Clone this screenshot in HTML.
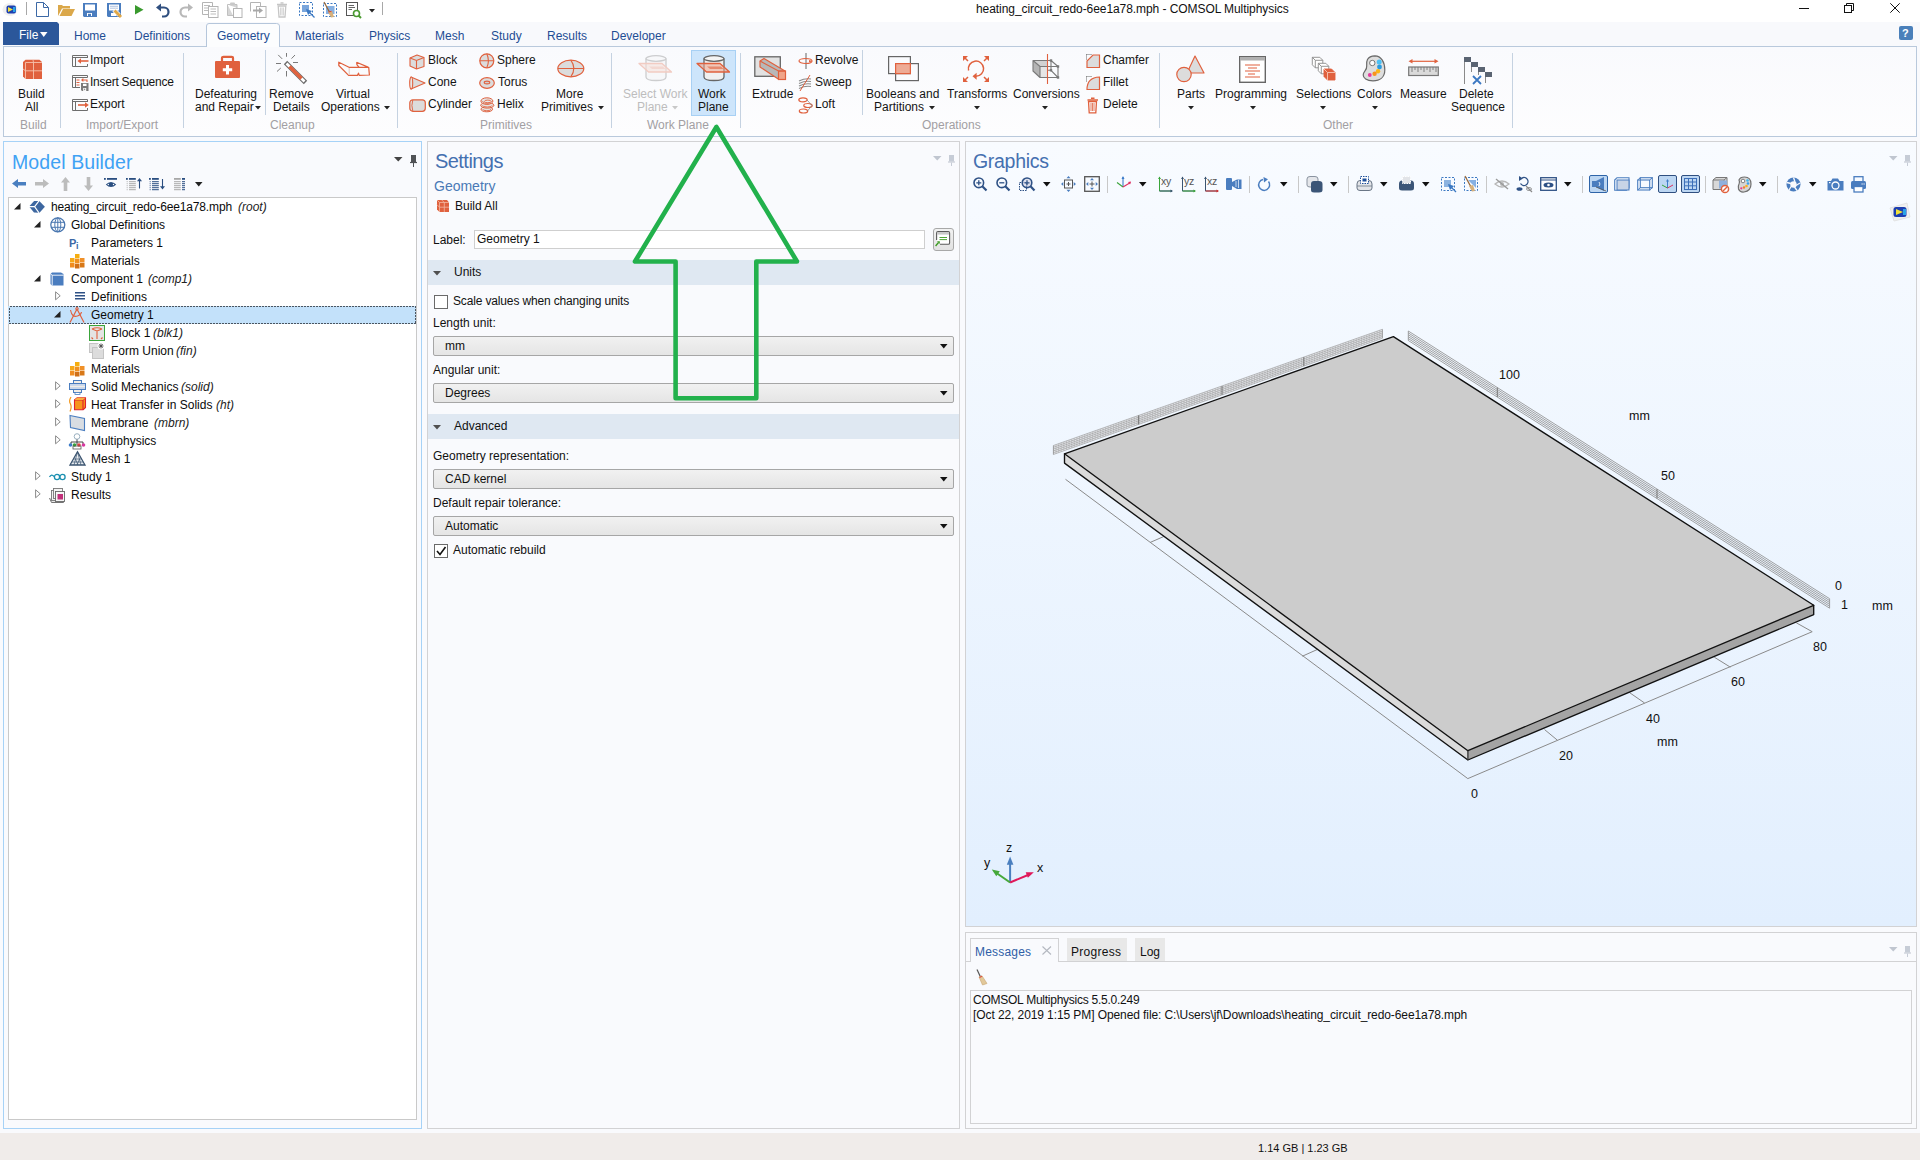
<!DOCTYPE html>
<html><head><meta charset="utf-8"><style>
html,body{margin:0;padding:0;}
body{width:1920px;height:1160px;overflow:hidden;position:relative;background:#f9fafd;font-family:"Liberation Sans",sans-serif;font-size:12px;color:#111;}
.t{position:absolute;white-space:nowrap;font-size:12px;line-height:12px;}
svg{overflow:visible}
</style></head><body>
<div style="position:absolute;left:0px;top:0px;width:1920px;height:22px;background:#ffffff"></div>
<div style="position:absolute;left:0px;top:22px;width:1920px;height:24px;background:#f8f9fc"></div>
<div style="position:absolute;left:3px;top:46px;width:1914px;height:90px;background:linear-gradient(#f9fafd,#fdfdfe);border:1px solid #b9c9dc;box-sizing:border-box;height:91px"></div>
<div style="position:absolute;left:3px;top:141px;width:419px;height:988px;background:#f9fafd;border:1px solid #a6d2f7;box-sizing:border-box"></div>
<div style="position:absolute;left:427px;top:141px;width:533px;height:988px;background:#f9fafd;border:1px solid #d2d2d4;box-sizing:border-box"></div>
<div style="position:absolute;left:965px;top:141px;width:952px;height:786px;background:linear-gradient(#f8fbff,#e2effe);border:1px solid #d2d2d4;box-sizing:border-box"></div>
<div style="position:absolute;left:965px;top:932px;width:952px;height:197px;background:#f9fafd;border:1px solid #d2d2d4;box-sizing:border-box"></div>
<div style="position:absolute;left:0px;top:1133px;width:1920px;height:27px;background:#f0ecea"></div>
<div class="t" style="left:1258px;top:1143px;font-size:11px;line-height:11px;color:#111;">1.14 GB | 1.23 GB</div>
<svg style="position:absolute;left:2px;top:2px;" width="16" height="14" viewBox="0 0 16 14"><ellipse cx="8" cy="7.5" rx="7.5" ry="6.5" fill="#e6e6e6" opacity="0.6"/><rect x="4.5" y="3.5" width="9.5" height="8" rx="2" fill="#1d3fb0"/><path d="M6 5 L11 7.5 L6 10 Z" fill="#f2e23a"/><rect x="11" y="5" width="2.5" height="5" fill="#2aa3e8"/></svg>
<div style="position:absolute;left:26px;top:2px;width:1px;height:13px;background:#a8a8a8"></div>
<svg style="position:absolute;left:36px;top:2px;" width="13" height="16" viewBox="0 0 13 16"><path d="M0.5 0.5 H7.5 L12.5 5.5 V14.5 H0.5 Z M7.5 0.5 V5.5 H12.5" fill="#fff" stroke="#3c69a6" stroke-width="1"/></svg>
<svg style="position:absolute;left:58px;top:5px;" width="17" height="12" viewBox="0 0 17 12"><path d="M0 0 H4 L5 1 H12 V3.5 H4 L0 11 Z" fill="#dba84a"/><path d="M1.5 11 L5 4 H17 L13.5 11 Z" fill="#dba84a"/></svg>
<svg style="position:absolute;left:83px;top:3px;" width="15" height="15" viewBox="0 0 15 15"><path d="M0 0 H14 V14 H1 L0 13 Z" fill="#4a7dbf"/><rect x="2" y="1.5" width="10" height="6" fill="#fff"/><rect x="4" y="10" width="5" height="3" fill="#fff"/><rect x="5" y="10.8" width="3" height="2.2" fill="#4a7dbf"/></svg>
<svg style="position:absolute;left:107px;top:3px;" width="16" height="16" viewBox="0 0 16 16"><path d="M0 0 H14 V14 H1 L0 13 Z" fill="#4a7dbf"/><rect x="2" y="1.5" width="10" height="6" fill="#fff"/><path d="M3 3.3 H11 M3 5.2 H11" stroke="#9ab3d8" stroke-width="0.8"/><rect x="4" y="10" width="5" height="3" fill="#fff"/><path d="M7 7 L12 12" stroke="#fff" stroke-width="4.5"/><path d="M7.5 7.5 L14 14" stroke="#e0a848" stroke-width="3"/></svg>
<svg style="position:absolute;left:135px;top:5px;" width="9" height="10" viewBox="0 0 9 10"><path d="M0 0 L8.5 4.7 L0 9.5 Z" fill="#3a9a2e"/></svg>
<svg style="position:absolute;left:156px;top:3px;" width="14" height="14" viewBox="0 0 14 14"><path d="M4.5 4.5 H8 A4.5 4.5 0 0 1 8 13.5 H6" fill="none" stroke="#2f4f7f" stroke-width="2.2"/><path d="M0 4.5 L5 0.5 V8.5 Z" fill="#2f4f7f"/></svg>
<svg style="position:absolute;left:179px;top:3px;" width="14" height="14" viewBox="0 0 14 14"><path d="M9.5 4.5 H6 A4.5 4.5 0 0 0 6 13.5 H8" fill="none" stroke="#b8b8b8" stroke-width="2.2"/><path d="M14 4.5 L9 0.5 V8.5 Z" fill="#b8b8b8"/></svg>
<svg style="position:absolute;left:202px;top:2px;" width="17" height="16" viewBox="0 0 17 16"><path d="M0.5 0.5 H10.5 V4 M0.5 0.5 V12.5 H6" fill="none" stroke="#b4b4b4"/><rect x="6.5" y="4.5" width="9.5" height="11" fill="#fff" stroke="#b4b4b4"/><path d="M2 3.5 H8 M2 6 H6 M2 8.5 H6 M8.5 7 H14 M8.5 9.5 H14 M8.5 12 H14" stroke="#b4b4b4" stroke-width="0.9"/></svg>
<svg style="position:absolute;left:227px;top:2px;" width="16" height="16" viewBox="0 0 16 16"><path d="M0.5 2.5 H10 V6 M0.5 2.5 V13.5 H6" fill="#d6d6d6" stroke="#c0c0c0"/><rect x="3" y="0.5" width="5" height="3" rx="1" fill="#c8c8c8"/><rect x="6.5" y="6.5" width="8.5" height="9" fill="#fff" stroke="#b4b4b4"/></svg>
<svg style="position:absolute;left:250px;top:2px;" width="17" height="16" viewBox="0 0 17 16"><path d="M0.5 9.5 V0.5 H10.5 V4" fill="none" stroke="#b4b4b4"/><rect x="6.5" y="4.5" width="9.5" height="11" fill="#fff" stroke="#b4b4b4"/><path d="M3 8.5 H10" stroke="#a8a8a8" stroke-width="2"/><path d="M9 5.5 L13 8.5 L9 11.5 Z" fill="#a8a8a8"/></svg>
<svg style="position:absolute;left:277px;top:2px;" width="11" height="16" viewBox="0 0 11 16"><path d="M0 2.5 H10 M3.5 0.8 H6.5" stroke="#c6c6c6" stroke-width="1.3"/><path d="M1.2 4 H8.8 L8 15 H2 Z" fill="none" stroke="#c6c6c6" stroke-width="1.3"/><path d="M3.6 5.5 V13.5 M5 5.5 V13.5 M6.4 5.5 V13.5" stroke="#c6c6c6" stroke-width="0.8"/></svg>
<svg style="position:absolute;left:299px;top:2px;" width="16" height="16" viewBox="0 0 16 16"><rect x="0.5" y="0.5" width="13" height="13" fill="none" stroke="#3b78c2" stroke-dasharray="2,1.5"/><rect x="3" y="3" width="7" height="7" fill="#7aa6dc"/><path d="M8 8 L15.5 15.5" stroke="#3b78c2" stroke-width="1.3"/><path d="M7 7 L13 9 L9 13 Z" fill="#3b78c2"/></svg>
<svg style="position:absolute;left:323px;top:2px;" width="15" height="16" viewBox="0 0 15 16"><rect x="0.5" y="1.5" width="13" height="13" fill="none" stroke="#3b78c2" stroke-dasharray="2,1.5"/><rect x="3" y="4" width="8.5" height="8" fill="#86b0e2"/><path d="M1 0 L7 11" stroke="#9a6a3a" stroke-width="1.3"/><path d="M5 10 L9 9 L11 15 L8 15.5 Z" fill="#d6b07a"/><path d="M5.5 10 L8.5 9.3" stroke="#d84a3a" stroke-width="1"/></svg>
<svg style="position:absolute;left:346px;top:2px;" width="16" height="17" viewBox="0 0 16 17"><rect x="0.5" y="0.5" width="11" height="13" fill="#fff" stroke="#555"/><path d="M2.5 3.5 H8 M2.5 5.5 H9 M2.5 7.5 H6" stroke="#555" stroke-width="0.9"/><circle cx="10.5" cy="11.5" r="3" fill="#fff" stroke="#4a9a30" stroke-width="1.6"/><path d="M12.5 13.5 L15 16" stroke="#4a9a30" stroke-width="2"/></svg>
<svg style="position:absolute;left:369px;top:9px;" width="6" height="4" viewBox="0 0 6 4"><path d="M0 0 H6 L3 3.5 Z" fill="#222"/></svg>
<div style="position:absolute;left:382px;top:2px;width:1px;height:13px;background:#a8a8a8"></div>
<div class="t" style="left:976px;top:3px;color:#111;letter-spacing:-0.07px">heating_circuit_redo-6ee1a78.mph - COMSOL Multiphysics</div>
<div style="position:absolute;left:1799px;top:8px;width:10px;height:1px;background:#111"></div>
<svg style="position:absolute;left:1844px;top:3px;" width="10" height="10" viewBox="0 0 10 10"><path d="M2.5 2.5 V0.5 H9.5 V7.5 H7.5" fill="none" stroke="#111"/><rect x="0.5" y="2.5" width="7" height="7" fill="none" stroke="#111"/></svg>
<svg style="position:absolute;left:1890px;top:3px;" width="10" height="10" viewBox="0 0 10 10"><path d="M0.3 0.3 L9.7 9.7 M9.7 0.3 L0.3 9.7" stroke="#111" stroke-width="1"/></svg>
<svg style="position:absolute;left:3px;top:22px;" width="57" height="24" viewBox="0 0 57 24"><path d="M0 0 H54 L56 2 V23 H0 Z" fill="#2b579a"/></svg>
<div class="t" style="left:19px;top:29px;color:#ffffff;">File</div>
<svg style="position:absolute;left:40px;top:32px;" width="8" height="6" viewBox="0 0 8 6"><path d="M0 0 H7.5 L3.75 5 Z" fill="#fff"/></svg>
<div class="t" style="left:74px;top:30px;color:#1e4d94;">Home</div>
<div class="t" style="left:134px;top:30px;color:#1e4d94;">Definitions</div>
<svg style="position:absolute;left:206px;top:23px;" width="74" height="24" viewBox="0 0 74 24"><path d="M0.5 24 V3 Q0.5 0.5 3 0.5 H70.5 Q73.5 0.5 73.5 3 V24" fill="#fcfdfe" stroke="#b5c6db"/></svg>
<div class="t" style="left:217px;top:30px;color:#1e4d94;">Geometry</div>
<div class="t" style="left:295px;top:30px;color:#1e4d94;">Materials</div>
<div class="t" style="left:369px;top:30px;color:#1e4d94;">Physics</div>
<div class="t" style="left:435px;top:30px;color:#1e4d94;">Mesh</div>
<div class="t" style="left:491px;top:30px;color:#1e4d94;">Study</div>
<div class="t" style="left:547px;top:30px;color:#1e4d94;">Results</div>
<div class="t" style="left:611px;top:30px;color:#1e4d94;">Developer</div>
<div style="position:absolute;left:1899px;top:26px;width:14px;height:14px;background:#4a80ba;border-radius:2px"></div>
<div class="t" style="left:1902px;top:28px;font-size:11px;line-height:11px;color:#fff;font-weight:bold">?</div>
<div style="position:absolute;left:60px;top:53px;width:1px;height:75px;background:#c5d2e1"></div>
<div style="position:absolute;left:183px;top:53px;width:1px;height:75px;background:#c5d2e1"></div>
<div style="position:absolute;left:265px;top:50px;width:1px;height:65px;background:#c5d2e1"></div>
<div style="position:absolute;left:397px;top:53px;width:1px;height:75px;background:#c5d2e1"></div>
<div style="position:absolute;left:611px;top:53px;width:1px;height:75px;background:#c5d2e1"></div>
<div style="position:absolute;left:740px;top:53px;width:1px;height:75px;background:#c5d2e1"></div>
<div style="position:absolute;left:862px;top:50px;width:1px;height:65px;background:#c5d2e1"></div>
<div style="position:absolute;left:1159px;top:53px;width:1px;height:75px;background:#c5d2e1"></div>
<div style="position:absolute;left:1512px;top:53px;width:1px;height:75px;background:#c5d2e1"></div>
<div class="t" style="left:20px;top:119px;color:#a29fa3;">Build</div>
<div class="t" style="left:86px;top:119px;color:#a29fa3;">Import/Export</div>
<div class="t" style="left:270px;top:119px;color:#a29fa3;">Cleanup</div>
<div class="t" style="left:480px;top:119px;color:#a29fa3;">Primitives</div>
<div class="t" style="left:647px;top:119px;color:#a29fa3;">Work Plane</div>
<div class="t" style="left:922px;top:119px;color:#a29fa3;">Operations</div>
<div class="t" style="left:1323px;top:119px;color:#a29fa3;">Other</div>
<svg style="position:absolute;left:0;top:0" width="1920" height="140" viewBox="0 0 1920 140"><path d="M23 62 L25.5 59.8 H39.5 L42 62 V79 H25.5 L23 76.5 Z" fill="#e0613e"/><path d="M25.5 62.5 V79 M25.5 62.5 H42 M33.5 62.5 V79 M25.5 70.8 H42 M23 69 L25.5 70.8 M33 59.8 L33.5 62.5" stroke="#f5c2ad" stroke-width="0.9" fill="none"/></svg>
<div class="t" style="left:18px;top:88px;color:#141414;">Build</div>
<div class="t" style="left:25px;top:101px;color:#141414;">All</div>
<svg style="position:absolute;left:0;top:0" width="1920" height="140" viewBox="0 0 1920 140"><path d="M87.5 58 V55.5 H72.5 V66.5 H87.5 V64 M72.5 57.5 H87.5 M75.5 57.5 V66.5" fill="none" stroke="#6e6e6e" stroke-width="1"/><path d="M80 61 H88.5" stroke="#e0613e" stroke-width="1.6"/><path d="M77.5 61 L81 58.3 V63.7 Z" fill="#e0613e"/><path d="M87.5 77.5 V75.5 H72.5 V87.5 H80 M72.5 77.5 H87.5 M75.5 77.5 V87.5" fill="none" stroke="#6e6e6e" stroke-width="1"/><path d="M76.5 80 H79.5 M76.5 82.5 H79.5 M76.5 85 H79.5" stroke="#e0613e" stroke-width="1"/><path d="M83 80 H87 V82" fill="none" stroke="#e0613e" stroke-width="1.1"/><path d="M81 80 L83.3 78 V82 Z" fill="#e0613e"/><path d="M81 83 H88.5 V91 H82 L81 90 Z" fill="#7a7a7a"/><rect x="83" y="83.8" width="3.5" height="2.2" fill="#fff"/><rect x="83.2" y="88" width="3" height="3" fill="#fff"/><rect x="84.2" y="88.6" width="1" height="1.6" fill="#7a7a7a"/><path d="M87.5 102 V99.5 H72.5 V110.5 H87.5 V108 M72.5 101.5 H87.5 M75.5 101.5 V110.5" fill="none" stroke="#6e6e6e" stroke-width="1"/><path d="M78 105 H85.5" stroke="#e0613e" stroke-width="1.6"/><path d="M88.8 105 L85 102.2 V107.8 Z" fill="#e0613e"/></svg>
<div class="t" style="left:90px;top:54px;color:#141414;">Import</div>
<div class="t" style="left:90px;top:76px;color:#141414;letter-spacing:-0.25px">Insert Sequence</div>
<div class="t" style="left:90px;top:98px;color:#141414;">Export</div>
<svg style="position:absolute;left:215px;top:56px;" width="26" height="23" viewBox="0 0 26 23"><rect x="0" y="5" width="25" height="17" rx="1" fill="#e0613e"/><path d="M7 5.5 V2 Q7 0.8 8.5 0.8 H16.5 Q18 0.8 18 2 V5.5" fill="none" stroke="#e0613e" stroke-width="2.2"/><path d="M12.5 9 V18.5 M7.8 13.7 H17.2" stroke="#fff" stroke-width="3"/></svg>
<div class="t" style="left:195px;top:88px;color:#141414;">Defeaturing</div>
<div class="t" style="left:195px;top:101px;color:#141414;">and Repair</div>
<svg style="position:absolute;left:255px;top:106px;" width="6" height="4" viewBox="0 0 6 4"><path d="M0 0 H6 L3 3.5 Z" fill="#222"/></svg>
<svg style="position:absolute;left:0;top:0" width="1920" height="140" viewBox="0 0 1920 140"><path d="M286.5 53 V56.8 M286.5 71 V76.5 M276 63.5 H281 M293 62.5 H298 M278.2 54.9 L282.2 58.9 M291.5 58.6 L295 55 M277 71.5 L280.8 68" stroke="#7a7a7a" stroke-width="1"/><path d="M285.5 62.5 L305.5 82.5" stroke="#6a6a6a" stroke-width="4.8" stroke-linecap="butt"/><path d="M286.5 63.5 L304.5 81.5" stroke="#ffffff" stroke-width="2.6"/><path d="M289.5 66.5 L301.5 78.5" stroke="#e0613e" stroke-width="3.6"/><path d="M338.8 62.2 L349 67.3 H368.7 L369.4 75 L359.2 75.4 L358.5 73.2 L357.4 75.4 L348.6 75.4 L338.8 65.5 Z M356.6 62.2 L368 67.1 M357 64.8 L359 67.1 M356.6 62.2 L357 64.8" fill="none" stroke="#e0613e" stroke-width="1.25" stroke-linejoin="round"/><path d="M349.2 68 L349.3 75" stroke="#e8d0c8" stroke-width="1.2"/></svg>
<div class="t" style="left:269px;top:88px;color:#141414;">Remove</div>
<div class="t" style="left:273px;top:101px;color:#141414;">Details</div>
<div class="t" style="left:336px;top:88px;color:#141414;">Virtual</div>
<div class="t" style="left:321px;top:101px;color:#141414;">Operations</div>
<svg style="position:absolute;left:384px;top:106px;" width="6" height="4" viewBox="0 0 6 4"><path d="M0 0 H6 L3 3.5 Z" fill="#222"/></svg>
<svg style="position:absolute;left:409px;top:54px;" width="16" height="16" viewBox="0 0 16 16"><path d="M1 4 L8 1 L15 3.5 V12.5 L7.5 15 L1 12 Z" fill="#dcdcdc" stroke="#e0613e" stroke-width="1.1" stroke-linejoin="round"/><path d="M1 4 L7.5 6.5 L15 3.5 M7.5 6.5 V15" fill="none" stroke="#e0613e" stroke-width="1.1"/></svg>
<div class="t" style="left:428px;top:54px;color:#141414;">Block</div>
<svg style="position:absolute;left:409px;top:76px;" width="17" height="14" viewBox="0 0 17 14"><path d="M2 1 L16 7 L2 13 Z" fill="#dcdcdc" stroke="#e0613e" stroke-width="1.1" stroke-linejoin="round"/><ellipse cx="2.2" cy="7" rx="1.5" ry="6" fill="#e8e8e8" stroke="#e0613e" stroke-width="1.1"/></svg>
<div class="t" style="left:428px;top:76px;color:#141414;">Cone</div>
<svg style="position:absolute;left:409px;top:99px;" width="17" height="13" viewBox="0 0 17 13"><rect x="0.8" y="0.8" width="15.5" height="11.5" rx="3" fill="#dcdcdc" stroke="#e0613e" stroke-width="1.2"/><path d="M3.8 1 Q2 6.5 3.8 12" fill="none" stroke="#e0613e" stroke-width="0.9"/></svg>
<div class="t" style="left:428px;top:98px;color:#141414;">Cylinder</div>
<svg style="position:absolute;left:479px;top:53px;" width="16" height="16" viewBox="0 0 16 16"><circle cx="7.8" cy="7.8" r="7" fill="#dcdcdc" stroke="#e0613e" stroke-width="1.2"/><path d="M0.8 7.8 H14.8 M7.8 0.8 Q11 7.8 7.8 14.8" fill="none" stroke="#e0613e" stroke-width="1.1"/></svg>
<div class="t" style="left:497px;top:54px;color:#141414;">Sphere</div>
<svg style="position:absolute;left:479px;top:77px;" width="16" height="12" viewBox="0 0 16 12"><ellipse cx="8" cy="6" rx="7.3" ry="5.3" fill="#dcdcdc" stroke="#e0613e" stroke-width="1.2"/><ellipse cx="8" cy="5.5" rx="2.8" ry="1.4" fill="#d0d0d0" stroke="#e0613e" stroke-width="1.1"/></svg>
<div class="t" style="left:498px;top:76px;color:#141414;">Torus</div>
<svg style="position:absolute;left:0;top:0" width="1920" height="140" viewBox="0 0 1920 140"><ellipse cx="486.8" cy="109.2" rx="5.8" ry="2.6" fill="#e4e4e4" stroke="#e0613e" stroke-width="1"/><path d="M482.8 109.2 A4.0 1.5 0 0 0 490.8 109.2" fill="none" stroke="#e0613e" stroke-width="0.85"/><ellipse cx="487.3" cy="105.3" rx="6.6" ry="2.8" fill="#e4e4e4" stroke="#e0613e" stroke-width="1"/><path d="M482.5 105.3 A4.8 1.6999999999999997 0 0 0 492.1 105.3" fill="none" stroke="#e0613e" stroke-width="0.85"/><ellipse cx="486.9" cy="101.1" rx="6.0" ry="3.3" fill="#e4e4e4" stroke="#e0613e" stroke-width="1"/><path d="M482.7 101.1 A4.2 2.1999999999999997 0 0 0 491.09999999999997 101.1" fill="none" stroke="#e0613e" stroke-width="0.85"/><ellipse cx="487.8" cy="101.4" rx="3.3" ry="1.3" fill="#e8e8e8" stroke="#e0613e" stroke-width="0.85"/></svg>
<div class="t" style="left:497px;top:98px;color:#141414;">Helix</div>
<svg style="position:absolute;left:557px;top:59px;" width="28" height="19" viewBox="0 0 28 19"><ellipse cx="13.8" cy="9.5" rx="13" ry="8.3" fill="#dcdcdc" stroke="#e0613e" stroke-width="1.2"/><path d="M1 9.5 H26.8 M13.8 1.2 Q20 9.5 13.8 17.8" fill="none" stroke="#e0613e" stroke-width="1.1"/></svg>
<div class="t" style="left:556px;top:88px;color:#141414;">More</div>
<div class="t" style="left:541px;top:101px;color:#141414;">Primitives</div>
<svg style="position:absolute;left:598px;top:106px;" width="6" height="4" viewBox="0 0 6 4"><path d="M0 0 H6 L3 3.5 Z" fill="#222"/></svg>
<svg style="position:absolute;left:639px;top:55px;" width="34" height="27" viewBox="0 0 34 27"><g opacity="0.3"><path d="M7 3.5 V22 Q7 25.5 17 25.5 Q27 25.5 27 22 V3.5" fill="#f0f0f0" stroke="#666666" stroke-width="1.3"/><ellipse cx="17" cy="3.5" rx="10" ry="2.8" fill="#f4f4f4" stroke="#666666" stroke-width="1.3"/><path d="M0 8.5 H23 L32.5 17 H9.5 Z" fill="#f0a58c" fill-opacity="0.55" stroke="#e0613e" stroke-width="1.3" stroke-linejoin="round"/><path d="M10 11.5 H24 L26.5 14 H13 Z" fill="#e0613e" fill-opacity="0.6"/></g></svg>
<div class="t" style="left:623px;top:88px;color:#bdbdbd;">Select Work</div>
<div class="t" style="left:637px;top:101px;color:#bdbdbd;">Plane</div>
<svg style="position:absolute;left:672px;top:106px;" width="6" height="4" viewBox="0 0 6 4"><path d="M0 0 H6 L3 3.5 Z" fill="#c8c8c8"/></svg>
<div style="position:absolute;left:691px;top:50px;width:45px;height:66px;background:#cde5fb;border:1px solid #a7d0f4;box-sizing:border-box"></div>
<svg style="position:absolute;left:697px;top:55px;" width="34" height="27" viewBox="0 0 34 27"><g opacity="1"><path d="M7 3.5 V22 Q7 25.5 17 25.5 Q27 25.5 27 22 V3.5" fill="#f0f0f0" stroke="#666666" stroke-width="1.3"/><ellipse cx="17" cy="3.5" rx="10" ry="2.8" fill="#f4f4f4" stroke="#666666" stroke-width="1.3"/><path d="M0 8.5 H23 L32.5 17 H9.5 Z" fill="#f0a58c" fill-opacity="0.55" stroke="#e0613e" stroke-width="1.3" stroke-linejoin="round"/><path d="M10 11.5 H24 L26.5 14 H13 Z" fill="#e0613e" fill-opacity="0.6"/></g></svg>
<div class="t" style="left:698px;top:88px;color:#141414;">Work</div>
<div class="t" style="left:698px;top:101px;color:#141414;">Plane</div>
<svg style="position:absolute;left:754px;top:56px;" width="33" height="25" viewBox="0 0 33 25"><rect x="0.8" y="0.8" width="25.5" height="19.5" fill="#e2e2e2" stroke="#666666" stroke-width="1.3"/><path d="M6 5 L10 2.5 L31 15 L31 23.5 L25 23.5 L6 11 Z" fill="#b8b8b8" stroke="#e0613e" stroke-width="1.2" stroke-linejoin="round"/><rect x="24.5" y="15" width="7" height="8.5" fill="#f0a58a" stroke="#e0613e" stroke-width="1.2"/><path d="M6 5 L24.5 15 L31 15" fill="none" stroke="#e0613e" stroke-width="1.2"/></svg>
<div class="t" style="left:752px;top:88px;color:#141414;">Extrude</div>
<svg style="position:absolute;left:798px;top:53px;" width="15" height="17" viewBox="0 0 15 17"><path d="M8 0 V16" stroke="#666666" stroke-width="1"/><ellipse cx="7.5" cy="8" rx="6.5" ry="2.5" fill="none" stroke="#e0613e" stroke-width="1.2"/><path d="M11 7 L14.5 8 L11 9.5" fill="#e0613e"/></svg>
<div class="t" style="left:815px;top:54px;color:#141414;">Revolve</div>
<svg style="position:absolute;left:798px;top:75px;" width="14" height="17" viewBox="0 0 14 17"><path d="M1 6 Q7 3 13 4 M1 8.5 Q7 5.5 13 6.5 M1 11 Q7 8 13 9 M1 13.5 Q7 10.5 13 11.5" fill="none" stroke="#8a8a8a" stroke-width="1.2"/><path d="M2 16 L12 0" stroke="#e0613e" stroke-width="1"/></svg>
<div class="t" style="left:815px;top:76px;color:#141414;">Sweep</div>
<svg style="position:absolute;left:798px;top:97px;" width="15" height="17" viewBox="0 0 15 17"><ellipse cx="5" cy="2.8" rx="4.2" ry="2" fill="none" stroke="#e0613e" stroke-width="1.2"/><ellipse cx="10" cy="8.5" rx="4.2" ry="2" fill="none" stroke="#e0613e" stroke-width="1.2"/><ellipse cx="5.5" cy="14" rx="4.2" ry="2" fill="none" stroke="#e0613e" stroke-width="1.2"/><path d="M9 3 L14 8.5 L9.5 14" fill="none" stroke="#888" stroke-width="0.8"/></svg>
<div class="t" style="left:815px;top:98px;color:#141414;">Loft</div>
<svg style="position:absolute;left:888px;top:56px;" width="31" height="26" viewBox="0 0 31 26"><rect x="0.6" y="0.6" width="21.8" height="17" fill="none" stroke="#666666" stroke-width="1.2"/><rect x="7.6" y="7.6" width="22.8" height="17" fill="none" stroke="#666666" stroke-width="1.2"/><rect x="7.6" y="7.6" width="14.8" height="10" fill="#eeab95" stroke="#e0613e" stroke-width="1.2"/></svg>
<div class="t" style="left:866px;top:88px;color:#141414;">Booleans and</div>
<div class="t" style="left:874px;top:101px;color:#141414;">Partitions</div>
<svg style="position:absolute;left:929px;top:106px;" width="6" height="4" viewBox="0 0 6 4"><path d="M0 0 H6 L3 3.5 Z" fill="#222"/></svg>
<svg style="position:absolute;left:0;top:0" width="1920" height="140" viewBox="0 0 1920 140"><path d="M963 56 H968 L963 61 Z M989 56 H984 L989 61 Z M963 82 H968 L963 77 Z M989 82 H984 L989 77 Z" fill="#e0613e"/><path d="M964.5 57.5 L968 61 M987.5 57.5 L984 61 M964.5 80.5 L968 77 M987.5 80.5 L984 77" stroke="#e0613e" stroke-width="1.5"/><path d="M968.6 70.5 A7.6 7.6 0 1 1 976 76.3" fill="none" stroke="#e0613e" stroke-width="1.5"/><path d="M972.5 76.3 L976.6 72.8 L976.6 79.8 Z" fill="#e0613e"/></svg>
<div class="t" style="left:947px;top:88px;color:#141414;">Transforms</div>
<svg style="position:absolute;left:974px;top:106px;" width="6" height="4" viewBox="0 0 6 4"><path d="M0 0 H6 L3 3.5 Z" fill="#222"/></svg>
<svg style="position:absolute;left:0;top:0" width="1920" height="140" viewBox="0 0 1920 140"><path d="M1033 60.5 H1047.5 V66.5 H1040 Z" fill="#d2d2d2"/><path d="M1033 60.5 L1040 66.5 V77.5 L1033 71 Z" fill="#b4b4b4"/><rect x="1040" y="66.5" width="7.5" height="11" fill="#e6e6e6"/><path d="M1033 60.5 H1051 L1058 66.5 V77.5 H1040 L1033 71 Z M1033 60.5 L1040 66.5 H1058 M1040 66.5 V77.5 M1051 60.5 V70.3 H1047.5 M1051 70.3 L1058 77.5" fill="none" stroke="#7a7a7a" stroke-width="1.1" stroke-linejoin="round"/><rect x="1049.8" y="59.3" width="2.4" height="2.4" fill="#777"/><rect x="1056.8" y="65.3" width="2.4" height="2.4" fill="#777"/><rect x="1049.8" y="69.1" width="2.4" height="2.4" fill="#777"/><rect x="1056.8" y="76.3" width="2.4" height="2.4" fill="#777"/><path d="M1047.5 54 V84" stroke="#e0613e" stroke-width="1.1"/></svg>
<div class="t" style="left:1013px;top:88px;color:#141414;">Conversions</div>
<svg style="position:absolute;left:1042px;top:106px;" width="6" height="4" viewBox="0 0 6 4"><path d="M0 0 H6 L3 3.5 Z" fill="#222"/></svg>
<svg style="position:absolute;left:1086px;top:54px;" width="15" height="15" viewBox="0 0 15 15"><path d="M0.5 0.5 H6 M0.5 0.5 V6" stroke="#666" stroke-width="1" stroke-dasharray="1,1"/><path d="M1 13.5 V7 L7 1 H13.5 V13.5 Z" fill="#dcdcdc" stroke="#e0613e" stroke-width="1.2"/></svg>
<div class="t" style="left:1103px;top:54px;color:#141414;">Chamfer</div>
<svg style="position:absolute;left:1086px;top:76px;" width="15" height="15" viewBox="0 0 15 15"><path d="M0.5 0.5 H6 M0.5 0.5 V6" stroke="#666" stroke-width="1" stroke-dasharray="1,1"/><path d="M1 13.5 Q1 1.5 13.5 1 V13.5 Z" fill="#dcdcdc" stroke="#e0613e" stroke-width="1.2"/></svg>
<div class="t" style="left:1103px;top:76px;color:#141414;">Fillet</div>
<svg style="position:absolute;left:1087px;top:97px;" width="12" height="17" viewBox="0 0 12 17"><path d="M0.5 3 H11 M4 1.2 H7.5" stroke="#e0613e" stroke-width="1.5"/><path d="M1.5 4.5 H9.5 L8.8 15.8 H2.2 Z" fill="none" stroke="#e0613e" stroke-width="1.3"/><path d="M4 6 V14 M5.5 6 V14 M7 6 V14" stroke="#e0613e" stroke-width="0.8"/></svg>
<div class="t" style="left:1103px;top:98px;color:#141414;">Delete</div>
<svg style="position:absolute;left:1176px;top:55px;" width="29" height="28" viewBox="0 0 29 28"><path d="M19 1 L28 18 H11 Z" fill="#dcdcdc" stroke="#e0613e" stroke-width="1.2" stroke-linejoin="round"/><circle cx="8" cy="19.5" r="7.2" fill="#dcdcdc" stroke="#e0613e" stroke-width="1.2"/></svg>
<div class="t" style="left:1177px;top:88px;color:#141414;">Parts</div>
<svg style="position:absolute;left:1188px;top:106px;" width="6" height="4" viewBox="0 0 6 4"><path d="M0 0 H6 L3 3.5 Z" fill="#222"/></svg>
<svg style="position:absolute;left:1239px;top:56px;" width="27" height="27" viewBox="0 0 27 27"><rect x="0.7" y="0.7" width="25.6" height="25.6" fill="#fff" stroke="#666666" stroke-width="1.4"/><rect x="1" y="1" width="25" height="3.5" fill="#b0b0b0"/><path d="M6 9 H21 M9 12 H18 M6 15 H21 M9 18 H16 M6 21 H21" stroke="#e0613e" stroke-width="1.1"/></svg>
<div class="t" style="left:1215px;top:88px;color:#141414;">Programming</div>
<svg style="position:absolute;left:1250px;top:106px;" width="6" height="4" viewBox="0 0 6 4"><path d="M0 0 H6 L3 3.5 Z" fill="#222"/></svg>
<svg style="position:absolute;left:0;top:0" width="1920" height="140" viewBox="0 0 1920 140"><path d="M1312.3 57.3 H1319.8 L1322.8 60.3 V67.8 H1315.3 L1312.3 64.8 Z" fill="#ffffff" stroke="#8a8a8a" stroke-width="0.9" stroke-linejoin="round"/><path d="M1312.3 57.3 L1315.3 60.3 H1322.8 M1315.3 60.3 V67.8" fill="none" stroke="#8a8a8a" stroke-width="0.9"/><path d="M1318.3 63.3 H1325.8 L1328.8 66.3 V73.8 H1321.3 L1318.3 70.8 Z" fill="#ffffff" stroke="#8a8a8a" stroke-width="0.9" stroke-linejoin="round"/><path d="M1318.3 63.3 L1321.3 66.3 H1328.8 M1321.3 66.3 V73.8" fill="none" stroke="#8a8a8a" stroke-width="0.9"/><path d="M1324 69 H1331.5 L1335.0 72.5 V80.0 H1327.5 L1324 76.5 Z" fill="#e0613e" stroke="#e0613e" stroke-width="0.9" stroke-linejoin="round"/><path d="M1324 69 L1327.5 72.5 H1335.0 M1327.5 72.5 V80.0" fill="none" stroke="#f7c6b4" stroke-width="0.9"/></svg>
<div class="t" style="left:1296px;top:88px;color:#141414;">Selections</div>
<svg style="position:absolute;left:1320px;top:106px;" width="6" height="4" viewBox="0 0 6 4"><path d="M0 0 H6 L3 3.5 Z" fill="#222"/></svg>
<svg style="position:absolute;left:0;top:0" width="1920" height="140" viewBox="0 0 1920 140"><path d="M1375 55.8 C1381 55.8 1384.8 62 1384.8 70 C1384.8 77 1380 80.8 1373 80.8 C1366.5 80.8 1363.2 78 1363.2 75 C1363.2 71.5 1367.2 70.5 1366.7 66 C1366.2 62 1366.5 56 1375 55.8 Z" fill="#dedede" stroke="#6a6a6a" stroke-width="1.2"/><circle cx="1372.3" cy="63" r="2.7" fill="#fff" stroke="#6a6a6a" stroke-width="0.9"/><circle cx="1379.2" cy="62" r="2.5" fill="#4cc0f4"/><circle cx="1379.5" cy="67" r="2.4" fill="#2a9ce0"/><circle cx="1378" cy="71.2" r="2.2" fill="#fbb516"/><circle cx="1374.6" cy="73.8" r="2.2" fill="#f7931e"/><circle cx="1369.8" cy="75" r="1.9" fill="#e83aa0"/></svg>
<div class="t" style="left:1357px;top:88px;color:#141414;">Colors</div>
<svg style="position:absolute;left:1372px;top:106px;" width="6" height="4" viewBox="0 0 6 4"><path d="M0 0 H6 L3 3.5 Z" fill="#222"/></svg>
<svg style="position:absolute;left:1408px;top:59px;" width="31" height="18" viewBox="0 0 31 18"><path d="M3 2.3 H28" stroke="#e0613e" stroke-width="1.2"/><path d="M0.5 2.3 L4.5 0 V4.6 Z M30.5 2.3 L26.5 0 V4.6 Z" fill="#e0613e"/><rect x="0.7" y="8" width="29.6" height="8.5" fill="#dadada" stroke="#777" stroke-width="1.2"/><path d="M4 8 V13 M7 8 V11 M10 8 V13 M13 8 V11 M16 8 V13 M19 8 V11 M22 8 V13 M25 8 V11 M28 8 V13" stroke="#777" stroke-width="0.9"/></svg>
<div class="t" style="left:1400px;top:88px;color:#141414;">Measure</div>
<svg style="position:absolute;left:1464px;top:57px;" width="29" height="28" viewBox="0 0 29 28"><rect x="0" y="0" width="7" height="5" fill="#5a6472"/><rect x="7" y="5" width="7" height="5" fill="#5a6472"/><rect x="14" y="10" width="7" height="5" fill="#5a6472"/><rect x="21" y="15" width="7" height="5" fill="#5a6472"/><path d="M0.5 5 V27 M7.5 10 V15 M14.5 15 V18 M21.5 20 V26" stroke="#8a8a8a" stroke-width="1"/><path d="M9 19 L17 27 M17 19 L9 27" stroke="#3b78c2" stroke-width="1.8"/></svg>
<div class="t" style="left:1459px;top:88px;color:#141414;">Delete</div>
<div class="t" style="left:1451px;top:101px;color:#141414;">Sequence</div>
<div class="t" style="left:12px;top:152.5px;font-size:19.5px;line-height:19.5px;color:#3fa2f4;letter-spacing:0.1px">Model Builder</div>
<svg style="position:absolute;left:394px;top:157px;" width="9" height="5" viewBox="0 0 9 5"><path d="M0 0 H8.5 L4.25 4.5 Z" fill="#444"/></svg>
<svg style="position:absolute;left:410px;top:155px;" width="7" height="12" viewBox="0 0 7 12"><rect x="1" y="0" width="5" height="7" fill="#505356"/><path d="M0 7.5 H7" stroke="#505356" stroke-width="1.2"/><path d="M3.5 8 V12" stroke="#505356" stroke-width="1"/></svg>
<svg style="position:absolute;left:12px;top:179px;" width="15" height="10" viewBox="0 0 15 10"><path d="M0 4.5 L6 0 V3 H14 V6.5 H6 V9 Z" fill="#4a7fc0"/></svg>
<svg style="position:absolute;left:35px;top:179px;" width="14" height="10" viewBox="0 0 14 10"><path d="M14 4.5 L8 0 V3 H0 V6.5 H8 V9 Z" fill="#bcbcbc"/></svg>
<svg style="position:absolute;left:61px;top:177px;" width="10" height="15" viewBox="0 0 10 15"><path d="M4.5 0 L9 5.5 H6.3 V14 H2.7 V5.5 H0 Z" fill="#bcbcbc"/></svg>
<svg style="position:absolute;left:84px;top:177px;" width="10" height="15" viewBox="0 0 10 15"><path d="M4.5 14 L9 8.5 H6.3 V0 H2.7 V8.5 H0 Z" fill="#bcbcbc"/></svg>
<svg style="position:absolute;left:0;top:0" width="500" height="300" viewBox="0 0 500 300"><rect x="104" y="178" width="1.8" height="1.8" fill="#2a4e80"/><rect x="107" y="178" width="10" height="1.8" fill="#2a4e80"/><path d="M105.8 184.5 Q111 179.3 116.2 184.5 Q111 189.7 105.8 184.5 Z" fill="#2a4e80"/><circle cx="108.3" cy="184.5" r="0.7" fill="#fff"/><circle cx="113.5" cy="184.5" r="0.7" fill="#fff"/><rect x="126" y="178" width="1.8" height="1.8" fill="#2a4e80"/><rect x="129" y="178" width="6.8" height="1.8" fill="#2a4e80"/><rect x="126.7" y="181.2" width="0.9" height="1" fill="#a8a8a8"/><rect x="129" y="181.2" width="6.8" height="1" fill="#a8a8a8"/><rect x="126.7" y="183.2" width="0.9" height="1" fill="#a8a8a8"/><rect x="129" y="183.2" width="6.8" height="1" fill="#a8a8a8"/><rect x="126.7" y="185.2" width="0.9" height="1" fill="#a8a8a8"/><rect x="129" y="185.2" width="6.8" height="1" fill="#a8a8a8"/><rect x="126.7" y="187.2" width="0.9" height="1" fill="#a8a8a8"/><rect x="129" y="187.2" width="6.8" height="1" fill="#a8a8a8"/><rect x="126.7" y="189.2" width="0.9" height="1" fill="#a8a8a8"/><rect x="129" y="189.2" width="6.8" height="1" fill="#a8a8a8"/><path d="M139.5 188.5 V180.5" stroke="#2a4e80" stroke-width="1.1"/><path d="M137 181.3 L139.5 178 L142 181.3 Z" fill="#2a4e80"/><rect x="149" y="178" width="1.8" height="1.8" fill="#2a4e80"/><rect x="152" y="178" width="6.8" height="1.8" fill="#2a4e80"/><rect x="149.7" y="181.2" width="0.9" height="1" fill="#2a4e80"/><rect x="152" y="181.2" width="6.8" height="1" fill="#2a4e80"/><rect x="149.7" y="183.2" width="0.9" height="1" fill="#2a4e80"/><rect x="152" y="183.2" width="6.8" height="1" fill="#2a4e80"/><rect x="149.7" y="185.2" width="0.9" height="1" fill="#2a4e80"/><rect x="152" y="185.2" width="6.8" height="1" fill="#2a4e80"/><rect x="149.7" y="187.2" width="0.9" height="1" fill="#2a4e80"/><rect x="152" y="187.2" width="6.8" height="1" fill="#2a4e80"/><rect x="149.7" y="189.2" width="0.9" height="1" fill="#2a4e80"/><rect x="152" y="189.2" width="6.8" height="1" fill="#2a4e80"/><path d="M162.5 179 V187" stroke="#2a4e80" stroke-width="1.1"/><path d="M160 186.3 L162.5 189.6 L165 186.3 Z" fill="#2a4e80"/><rect x="174" y="178" width="6.8" height="1.8" fill="#a8a8a8"/><rect x="182" y="178" width="3" height="1.8" fill="#2a4e80"/><rect x="174" y="181.2" width="6.8" height="1" fill="#a8a8a8"/><rect x="182" y="181.2" width="3" height="1" fill="#2a4e80"/><rect x="174" y="183.2" width="6.8" height="1" fill="#a8a8a8"/><rect x="182" y="183.2" width="3" height="1" fill="#2a4e80"/><rect x="174" y="185.2" width="6.8" height="1" fill="#a8a8a8"/><rect x="182" y="185.2" width="3" height="1" fill="#2a4e80"/><rect x="174" y="187.2" width="6.8" height="1" fill="#a8a8a8"/><rect x="182" y="187.2" width="3" height="1" fill="#2a4e80"/><rect x="174" y="189.2" width="6.8" height="1" fill="#a8a8a8"/><rect x="182" y="189.2" width="3" height="1" fill="#2a4e80"/></svg>
<svg style="position:absolute;left:195px;top:182px;" width="8" height="5" viewBox="0 0 8 5"><path d="M0 0 H7.5 L3.75 4.5 Z" fill="#222"/></svg>
<div style="position:absolute;left:8px;top:197px;width:409px;height:923px;background:#ffffff;border:1px solid #c9c9c9;box-sizing:border-box"></div>
<div style="position:absolute;left:8px;top:306px;width:408px;height:18px;background:#c3e1fa"></div>
<svg style="position:absolute;left:0;top:0" width="500" height="400" viewBox="0 0 500 400"><rect x="9.5" y="306.5" width="406" height="17" fill="none" stroke="#4a5560" stroke-width="1" stroke-dasharray="2,1" shape-rendering="crispEdges"/></svg>
<svg style="position:absolute;left:14px;top:203px;" width="7" height="7" viewBox="0 0 7 7"><path d="M6.5 0 V6.5 H0 Z" fill="#222"/></svg>
<div class="t" style="left:51px;top:201px;color:#0a0a0a;"><span style="letter-spacing:-0.14px">heating_circuit_redo-6ee1a78.mph</span></div>
<div class="t" style="left:238px;top:201px;font-style:italic;color:#222">(root)</div>
<svg style="position:absolute;left:34px;top:221px;" width="7" height="7" viewBox="0 0 7 7"><path d="M6.5 0 V6.5 H0 Z" fill="#222"/></svg>
<div class="t" style="left:71px;top:219px;color:#0a0a0a;">Global Definitions</div>
<div class="t" style="left:91px;top:237px;color:#0a0a0a;">Parameters 1</div>
<div class="t" style="left:91px;top:255px;color:#0a0a0a;">Materials</div>
<svg style="position:absolute;left:34px;top:275px;" width="7" height="7" viewBox="0 0 7 7"><path d="M6.5 0 V6.5 H0 Z" fill="#222"/></svg>
<div class="t" style="left:71px;top:273px;color:#0a0a0a;">Component 1</div>
<div class="t" style="left:148px;top:273px;font-style:italic;color:#222">(comp1)</div>
<svg style="position:absolute;left:55px;top:291px;" width="6" height="10" viewBox="0 0 6 10"><path d="M0.6 0.8 L5.2 4.8 L0.6 8.8 Z" fill="#fff" stroke="#8a8a8a" stroke-width="1"/></svg>
<div class="t" style="left:91px;top:291px;color:#0a0a0a;">Definitions</div>
<svg style="position:absolute;left:54px;top:311px;" width="7" height="7" viewBox="0 0 7 7"><path d="M6.5 0 V6.5 H0 Z" fill="#222"/></svg>
<div class="t" style="left:91px;top:309px;color:#0a0a0a;">Geometry 1</div>
<div class="t" style="left:111px;top:327px;color:#0a0a0a;">Block 1</div>
<div class="t" style="left:153px;top:327px;font-style:italic;color:#222">(blk1)</div>
<div class="t" style="left:111px;top:345px;color:#0a0a0a;">Form Union</div>
<div class="t" style="left:176px;top:345px;font-style:italic;color:#222">(fin)</div>
<div class="t" style="left:91px;top:363px;color:#0a0a0a;">Materials</div>
<svg style="position:absolute;left:55px;top:381px;" width="6" height="10" viewBox="0 0 6 10"><path d="M0.6 0.8 L5.2 4.8 L0.6 8.8 Z" fill="#fff" stroke="#8a8a8a" stroke-width="1"/></svg>
<div class="t" style="left:91px;top:381px;color:#0a0a0a;">Solid Mechanics</div>
<div class="t" style="left:181px;top:381px;font-style:italic;color:#222">(solid)</div>
<svg style="position:absolute;left:55px;top:399px;" width="6" height="10" viewBox="0 0 6 10"><path d="M0.6 0.8 L5.2 4.8 L0.6 8.8 Z" fill="#fff" stroke="#8a8a8a" stroke-width="1"/></svg>
<div class="t" style="left:91px;top:399px;color:#0a0a0a;">Heat Transfer in Solids</div>
<div class="t" style="left:216px;top:399px;font-style:italic;color:#222">(ht)</div>
<svg style="position:absolute;left:55px;top:417px;" width="6" height="10" viewBox="0 0 6 10"><path d="M0.6 0.8 L5.2 4.8 L0.6 8.8 Z" fill="#fff" stroke="#8a8a8a" stroke-width="1"/></svg>
<div class="t" style="left:91px;top:417px;color:#0a0a0a;">Membrane</div>
<div class="t" style="left:154px;top:417px;font-style:italic;color:#222">(mbrn)</div>
<svg style="position:absolute;left:55px;top:435px;" width="6" height="10" viewBox="0 0 6 10"><path d="M0.6 0.8 L5.2 4.8 L0.6 8.8 Z" fill="#fff" stroke="#8a8a8a" stroke-width="1"/></svg>
<div class="t" style="left:91px;top:435px;color:#0a0a0a;">Multiphysics</div>
<div class="t" style="left:91px;top:453px;color:#0a0a0a;">Mesh 1</div>
<svg style="position:absolute;left:35px;top:471px;" width="6" height="10" viewBox="0 0 6 10"><path d="M0.6 0.8 L5.2 4.8 L0.6 8.8 Z" fill="#fff" stroke="#8a8a8a" stroke-width="1"/></svg>
<div class="t" style="left:71px;top:471px;color:#0a0a0a;">Study 1</div>
<svg style="position:absolute;left:35px;top:489px;" width="6" height="10" viewBox="0 0 6 10"><path d="M0.6 0.8 L5.2 4.8 L0.6 8.8 Z" fill="#fff" stroke="#8a8a8a" stroke-width="1"/></svg>
<div class="t" style="left:71px;top:489px;color:#0a0a0a;">Results</div>
<svg style="position:absolute;left:0;top:0" width="500" height="300" viewBox="0 0 500 300"><path d="M29.1 206.6 L34.1 200.9 H39.3 L44.9 206.7 L39.5 212.7 L34 212.5 Z" fill="#3d67a0"/><path d="M29 206.6 H34.6 L39.2 200.6 M34.6 206.6 L39 212.9" fill="none" stroke="#ffffff" stroke-width="1.1"/></svg>
<svg style="position:absolute;left:50px;top:217px;" width="16" height="16" viewBox="0 0 16 16"><circle cx="7.8" cy="7.8" r="7" fill="none" stroke="#4a77b0" stroke-width="1.3"/><ellipse cx="7.8" cy="7.8" rx="3" ry="7" fill="none" stroke="#4a77b0" stroke-width="1"/><path d="M7.8 0.8 V14.8 M1 5.3 H14.6 M1 10.3 H14.6" stroke="#4a77b0" stroke-width="1"/></svg>
<div class="t" style="left:69px;top:238px;font-size:11px;line-height:11px;color:#3c69a6;font-weight:bold">P</div>
<div class="t" style="left:76px;top:242px;font-size:9px;line-height:9px;color:#3c69a6;font-weight:bold">i</div>
<svg style="position:absolute;left:70px;top:254px;" width="15" height="15" viewBox="0 0 15 15"><rect x="5" y="0" width="4.5" height="4.5" fill="#f6ae10"/><rect x="0" y="4" width="4.5" height="4.5" fill="#f6a818"/><rect x="5" y="5" width="4.5" height="4.5" fill="#f09020"/><rect x="10" y="4" width="4.5" height="4.5" fill="#f09028"/><rect x="0" y="9" width="4.5" height="4.5" fill="#f08c20"/><rect x="10" y="9" width="4.5" height="4.5" fill="#d87818"/><rect x="5" y="10" width="4.5" height="4.5" fill="#d07018"/></svg>
<svg style="position:absolute;left:70px;top:362px;" width="15" height="15" viewBox="0 0 15 15"><rect x="5" y="0" width="4.5" height="4.5" fill="#f6ae10"/><rect x="0" y="4" width="4.5" height="4.5" fill="#f6a818"/><rect x="5" y="5" width="4.5" height="4.5" fill="#f09020"/><rect x="10" y="4" width="4.5" height="4.5" fill="#f09028"/><rect x="0" y="9" width="4.5" height="4.5" fill="#f08c20"/><rect x="10" y="9" width="4.5" height="4.5" fill="#d87818"/><rect x="5" y="10" width="4.5" height="4.5" fill="#d07018"/></svg>
<svg style="position:absolute;left:50px;top:272px;" width="14" height="14" viewBox="0 0 14 14"><path d="M0.5 2 L2 0.5 H11 L13.5 2 V13.5 H2 L0.5 12 Z" fill="#4a7dbf"/><path d="M0.5 2 L2.2 3.2 V13.5 M2.2 3.2 H13.5" fill="none" stroke="#fff" stroke-width="0.9"/></svg>
<svg style="position:absolute;left:75px;top:292px;" width="11" height="8" viewBox="0 0 11 8"><path d="M0 0.8 H10 M0 3.8 H10 M0 6.8 H10" stroke="#2e5185" stroke-width="1.4"/></svg>
<svg style="position:absolute;left:69px;top:307px;" width="17" height="16" viewBox="0 0 17 16"><path d="M1 15.5 L8 2 L15 15.5" fill="none" stroke="#e0613e" stroke-width="1.2"/><path d="M1.5 3 Q3 11 8.5 9 Q12 8 12.5 5" fill="none" stroke="#e0613e" stroke-width="1.1"/><circle cx="8" cy="1.8" r="1.3" fill="none" stroke="#e0613e" stroke-width="1"/></svg>
<svg style="position:absolute;left:89px;top:325px;" width="16" height="16" viewBox="0 0 16 16"><rect x="0.5" y="0.5" width="15" height="15" fill="#e4e4e4" stroke="#3aa53a" stroke-width="1"/><path d="M3 4 Q8 1.5 13 4 M8 6 V14 M3 4 L8 6 L13 4 M2.5 12.5 L4 14 M13.5 12.5 L12 14" fill="none" stroke="#e0613e" stroke-width="1.1"/></svg>
<svg style="position:absolute;left:89px;top:343px;" width="16" height="16" viewBox="0 0 16 16"><rect x="0.5" y="0.5" width="10" height="9" fill="#e2e2e2" stroke="#c4c4c4"/><rect x="3.5" y="4.5" width="11" height="11" fill="#dcdcdc" stroke="#c4c4c4"/><circle cx="12" cy="3" r="3.5" fill="#fff"/><path d="M12 0.5 V5.5 M9.5 3 H14.5 M10.3 1.3 L13.7 4.7 M13.7 1.3 L10.3 4.7" stroke="#555" stroke-width="1"/></svg>
<svg style="position:absolute;left:69px;top:380px;" width="17" height="15" viewBox="0 0 17 15"><rect x="4.5" y="0.5" width="8" height="3" fill="#f2ede6" stroke="#4a7dbf"/><rect x="0.5" y="3.5" width="16" height="6" fill="#c9d6ea" stroke="#4a7dbf"/><path d="M1 6.5 H16" stroke="#f2ede6" stroke-width="1.2"/><rect x="4.5" y="9.5" width="8" height="3" fill="#f2ede6" stroke="#4a7dbf"/><rect x="6" y="12.5" width="5" height="2" fill="#fff" stroke="#4a7dbf" stroke-width="0.8"/></svg>
<svg style="position:absolute;left:68px;top:396px;" width="19" height="17" viewBox="0 0 19 17"><path d="M3 1 Q0.5 5 2.5 8 Q4 11 2 15.5" fill="none" stroke="#f59a20" stroke-width="1.2"/><path d="M6.5 4 L9 1.8 H17.5 V11.5 L15 13.8 H6.5 Z" fill="#f7941d" stroke="#e0202e" stroke-width="1.1" stroke-linejoin="round"/><path d="M6.5 4 H15 V13.8 M15 4 L17.5 1.8" fill="none" stroke="#e0202e" stroke-width="1.1"/><path d="M6.5 4 L9 1.8 H17.5 L15 4 Z" fill="#f9b040"/></svg>
<svg style="position:absolute;left:69px;top:415px;" width="17" height="16" viewBox="0 0 17 16"><path d="M1 0.5 L15.5 3.5 V15.5 L1.5 12.5 Z" fill="#d9dde2" stroke="#4a7dbf" stroke-width="1.1"/></svg>
<svg style="position:absolute;left:68px;top:433px;" width="18" height="16" viewBox="0 0 18 16"><circle cx="9" cy="3.5" r="2.8" fill="none" stroke="#9ab0c0" stroke-width="1"/><path d="M9 6.5 V9 M3 12 V9 H15 V12 M9 9 V12" fill="none" stroke="#333" stroke-width="0.9"/><circle cx="2.5" cy="12" r="1.8" fill="#3d7cc9"/><circle cx="6.5" cy="12" r="1.8" fill="#3aa53a"/><circle cx="11" cy="12" r="1.8" fill="#e84040"/><circle cx="15.5" cy="12" r="1.8" fill="#d838a0"/><rect x="5" y="13" width="8" height="3" fill="none" stroke="#555" stroke-width="0.8"/></svg>
<svg style="position:absolute;left:69px;top:451px;" width="17" height="15" viewBox="0 0 17 15"><path d="M8.5 0.8 L16 14 H1 Z" fill="#e8ecf0" stroke="#3b5470" stroke-width="1.3"/><path d="M4.5 8 H12.5 M3 11 H14 M8.5 0.8 L5 14 M8.5 0.8 L12 14 M6.5 8 L9 14 M10.5 8 L8 14" fill="none" stroke="#3b5470" stroke-width="0.7"/></svg>
<svg style="position:absolute;left:49px;top:472px;" width="18" height="10" viewBox="0 0 18 10"><path d="M0.5 5 Q2.5 1.5 5 4.5" fill="none" stroke="#1a8fb0" stroke-width="1.3"/><circle cx="8" cy="5" r="2.6" fill="none" stroke="#1a8fb0" stroke-width="1.3"/><circle cx="13.5" cy="5" r="2.6" fill="none" stroke="#1a8fb0" stroke-width="1.3"/></svg>
<svg style="position:absolute;left:49px;top:487px;" width="18" height="17" viewBox="0 0 18 17"><path d="M0.5 11 L2.5 15.5 H14.5 V13" fill="#e8e8e8" stroke="#666" stroke-width="0.9"/><rect x="2.5" y="3.5" width="9" height="10" fill="#f2f2f2" stroke="#777" stroke-width="0.9"/><rect x="4.5" y="1.5" width="9" height="10" fill="#f4f4f4" stroke="#777" stroke-width="0.9"/><rect x="6.5" y="4.5" width="9" height="10" fill="#f6f6f6" stroke="#666" stroke-width="0.9"/><rect x="8.5" y="7" width="5.5" height="5.5" fill="#c2307a"/></svg>
<div class="t" style="left:435px;top:151px;font-size:20px;line-height:20px;color:#4570b0;letter-spacing:-0.55px">Settings</div>
<svg style="position:absolute;left:933px;top:156px;" width="9" height="5" viewBox="0 0 9 5"><path d="M0 0 H8.5 L4.25 4.5 Z" fill="#c0c6d0"/></svg>
<svg style="position:absolute;left:948px;top:155px;" width="7" height="11" viewBox="0 0 7 11"><rect x="1" y="0" width="5" height="6.5" fill="#c6ccd6"/><path d="M0 7 H7" stroke="#c6ccd6" stroke-width="1.2"/><path d="M3.5 7.5 V11" stroke="#c6ccd6" stroke-width="1"/></svg>
<div class="t" style="left:434px;top:179px;font-size:14px;line-height:14px;color:#4a79b6;">Geometry</div>
<svg style="position:absolute;left:0;top:0" width="1920" height="300" viewBox="0 0 1920 300"><path d="M437 200 H447 L449 202.5 V212 H439.5 L437 209.5 Z" fill="#e0613e"/><path d="M439.5 202.5 V212 M439.5 202.5 H449 M444.3 202.5 V212 M439.5 207.2 H449 M437 200 L439.5 202.5 M437 204.7 L439.5 207.2 M441.8 200 L444.3 202.5" fill="none" stroke="#f2b8a2" stroke-width="0.8"/></svg>
<div class="t" style="left:455px;top:200px;color:#111;">Build All</div>
<div class="t" style="left:433px;top:234px;color:#111;">Label:</div>
<div style="position:absolute;left:474px;top:230px;width:451px;height:19px;background:#ffffff;border:1px solid #cfcfcf;box-sizing:border-box"></div>
<div class="t" style="left:477px;top:233px;color:#111;">Geometry 1</div>
<div style="position:absolute;left:933px;top:228px;width:21px;height:23px;background:linear-gradient(#f2f2f2,#e2e2e2);border:1px solid #a8a8a8;border-radius:3px;box-sizing:border-box"></div>
<svg style="position:absolute;left:0;top:0" width="1920" height="300" viewBox="0 0 1920 300"><path d="M936.6 240 V233 Q936.6 231.6 938 231.6 H948.3 Q949.6 231.6 949.6 233 V243 Q949.6 244.3 948.3 244.3 H940" fill="#ffffff" stroke="#5a5a5a" stroke-width="1.1"/><rect x="937.2" y="232.2" width="11.8" height="2.4" fill="#c8c8c8"/><path d="M939.5 237.5 H947 M939.5 239.6 H947" stroke="#3a9a20" stroke-width="0.9"/><path d="M935.6 246 L938.5 242.5" stroke="#3a9a20" stroke-width="1.3"/><path d="M937 241.2 H939.8 V244 Z" fill="#3a9a20"/></svg>
<div style="position:absolute;left:428px;top:260px;width:531px;height:25px;background:#dfe8f2"></div>
<svg style="position:absolute;left:433px;top:271px;" width="9" height="5" viewBox="0 0 9 5"><path d="M0 0 H8 L4 4.5 Z" fill="#505050"/></svg>
<div class="t" style="left:454px;top:266px;color:#111;">Units</div>
<div style="position:absolute;left:434px;top:295px;width:14px;height:14px;background:#ffffff;border:1px solid #6a6a6a;box-sizing:border-box"></div>
<div class="t" style="left:453px;top:295px;color:#111;letter-spacing:-0.15px">Scale values when changing units</div>
<div class="t" style="left:433px;top:317px;color:#111;">Length unit:</div>
<div style="position:absolute;left:433px;top:336px;width:521px;height:20px;background:linear-gradient(#f1f1f1,#e5e5e5);border:1px solid #a6a6a6;border-radius:2px;box-sizing:border-box"></div>
<div class="t" style="left:445px;top:340px;color:#111;">mm</div>
<svg style="position:absolute;left:940px;top:344px;" width="8" height="5" viewBox="0 0 8 5"><path d="M0 0 H7.5 L3.75 4.5 Z" fill="#111"/></svg>
<div class="t" style="left:433px;top:364px;color:#111;">Angular unit:</div>
<div style="position:absolute;left:433px;top:383px;width:521px;height:20px;background:linear-gradient(#f1f1f1,#e5e5e5);border:1px solid #a6a6a6;border-radius:2px;box-sizing:border-box"></div>
<div class="t" style="left:445px;top:387px;color:#111;">Degrees</div>
<svg style="position:absolute;left:940px;top:391px;" width="8" height="5" viewBox="0 0 8 5"><path d="M0 0 H7.5 L3.75 4.5 Z" fill="#111"/></svg>
<div style="position:absolute;left:428px;top:414px;width:531px;height:25px;background:#dfe8f2"></div>
<svg style="position:absolute;left:433px;top:425px;" width="9" height="5" viewBox="0 0 9 5"><path d="M0 0 H8 L4 4.5 Z" fill="#505050"/></svg>
<div class="t" style="left:454px;top:420px;color:#111;">Advanced</div>
<div class="t" style="left:433px;top:450px;color:#111;">Geometry representation:</div>
<div style="position:absolute;left:433px;top:469px;width:521px;height:20px;background:linear-gradient(#f1f1f1,#e5e5e5);border:1px solid #a6a6a6;border-radius:2px;box-sizing:border-box"></div>
<div class="t" style="left:445px;top:473px;color:#111;">CAD kernel</div>
<svg style="position:absolute;left:940px;top:477px;" width="8" height="5" viewBox="0 0 8 5"><path d="M0 0 H7.5 L3.75 4.5 Z" fill="#111"/></svg>
<div class="t" style="left:433px;top:497px;color:#111;">Default repair tolerance:</div>
<div style="position:absolute;left:433px;top:516px;width:521px;height:20px;background:linear-gradient(#f1f1f1,#e5e5e5);border:1px solid #a6a6a6;border-radius:2px;box-sizing:border-box"></div>
<div class="t" style="left:445px;top:520px;color:#111;">Automatic</div>
<svg style="position:absolute;left:940px;top:524px;" width="8" height="5" viewBox="0 0 8 5"><path d="M0 0 H7.5 L3.75 4.5 Z" fill="#111"/></svg>
<div style="position:absolute;left:434px;top:544px;width:14px;height:14px;background:#ffffff;border:1px solid #6a6a6a;box-sizing:border-box"></div>
<svg style="position:absolute;left:436px;top:546px;" width="10" height="10" viewBox="0 0 10 10"><path d="M1 5 L4 8.5 L9.5 1" fill="none" stroke="#111" stroke-width="1.6"/></svg>
<div class="t" style="left:453px;top:544px;color:#111;">Automatic rebuild</div>
<div class="t" style="left:973px;top:151.5px;font-size:19.5px;line-height:19.5px;color:#4570b0;letter-spacing:-0.3px">Graphics</div>
<svg style="position:absolute;left:1889px;top:156px;" width="9" height="5" viewBox="0 0 9 5"><path d="M0 0 H8.5 L4.25 4.5 Z" fill="#c0c6d0"/></svg>
<svg style="position:absolute;left:1904px;top:155px;" width="7" height="11" viewBox="0 0 7 11"><rect x="1" y="0" width="5" height="6.5" fill="#c6ccd6"/><path d="M0 7 H7" stroke="#c6ccd6" stroke-width="1.2"/><path d="M3.5 7.5 V11" stroke="#c6ccd6" stroke-width="1"/></svg>
<svg style="position:absolute;left:973px;top:177px;" width="15" height="15" viewBox="0 0 15 15"><circle cx="5.8" cy="5.8" r="4.8" fill="none" stroke="#2e5185" stroke-width="1.6"/><path d="M9.3 9.3 L13.5 13.5" stroke="#2e5185" stroke-width="2.2"/><path d="M3.3 5.8 H8.3 M5.8 3.3 V8.3" stroke="#2e5185" stroke-width="1.3"/></svg>
<svg style="position:absolute;left:996px;top:177px;" width="15" height="15" viewBox="0 0 15 15"><circle cx="5.8" cy="5.8" r="4.8" fill="none" stroke="#2e5185" stroke-width="1.6"/><path d="M9.3 9.3 L13.5 13.5" stroke="#2e5185" stroke-width="2.2"/><path d="M3.3 5.8 H8.3" stroke="#2e5185" stroke-width="1.3"/></svg>
<svg style="position:absolute;left:1019px;top:177px;" width="17" height="15" viewBox="0 0 17 15"><rect x="0.5" y="5.5" width="7" height="8" fill="none" stroke="#2e5185" stroke-dasharray="1.5,1"/><circle cx="8" cy="5.8" r="4.8" fill="rgba(200,200,220,0.5)" stroke="#2e5185" stroke-width="1.6"/><path d="M11.5 9.3 L15.5 13.5" stroke="#2e5185" stroke-width="2.2"/><path d="M5.5 5.8 H10.5 M8 3.3 V8.3" stroke="#2e5185" stroke-width="1.3"/></svg>
<svg style="position:absolute;left:1043px;top:182px;" width="8" height="5" viewBox="0 0 8 5"><path d="M0 0 H7.5 L3.75 4.5 Z" fill="#111"/></svg>
<svg style="position:absolute;left:1061px;top:176px;" width="15" height="16" viewBox="0 0 15 16"><rect x="3.5" y="4" width="8" height="8" fill="none" stroke="#555" stroke-width="1"/><path d="M5.5 8 H9.5 M7.5 6 V10" stroke="#555" stroke-width="1"/><path d="M7.5 0 L9.5 2.3 H5.5 Z M7.5 16 L9.5 13.7 H5.5 Z M0 8 L2.3 6 V10 Z M15 8 L12.7 6 V10 Z" fill="#4a7dbf"/></svg>
<svg style="position:absolute;left:1084px;top:176px;" width="16" height="16" viewBox="0 0 16 16"><rect x="0.7" y="0.7" width="14.6" height="14.6" fill="none" stroke="#555" stroke-width="1.3"/><path d="M5.5 8 H10.5 M8 5.5 V10.5" stroke="#555" stroke-width="1"/><path d="M8 2 L10 4.3 H6 Z M8 14 L10 11.7 H6 Z M2 8 L4.3 6 V10 Z M14 8 L11.7 6 V10 Z" fill="#4a7dbf"/></svg>
<div style="position:absolute;left:1107px;top:176px;width:1px;height:17px;background:#c8c8c8"></div>
<svg style="position:absolute;left:1115px;top:176px;" width="17" height="15" viewBox="0 0 17 15"><path d="M8 1 V11" stroke="#3d7cc9" stroke-width="1.1"/><path d="M6.5 3 L8 0 L9.5 3 Z" fill="#3d7cc9"/><path d="M8 11 L2 6.5" stroke="#3aa53a" stroke-width="1.1"/><path d="M8 11 L15.5 6.5" stroke="#e03060" stroke-width="1.1"/><path d="M13 6 L16 5.5 L15 8.5 Z" fill="#e03060"/></svg>
<svg style="position:absolute;left:1139px;top:182px;" width="8" height="5" viewBox="0 0 8 5"><path d="M0 0 H7.5 L3.75 4.5 Z" fill="#111"/></svg>
<svg style="position:absolute;left:1158px;top:176px;" width="16" height="16" viewBox="0 0 16 16"><path d="M1.5 1 V15 H14" fill="none" stroke="#3aa53a" stroke-width="1"/><path d="M0 3 L1.5 0.5 L3 3 Z" fill="#3aa53a"/><path d="M1.5 15 H14" stroke="#3b5470" stroke-width="1"/><path d="M12.5 13.5 L15 15 L12.5 16.5 Z" fill="#3b5470"/></svg>
<div class="t" style="left:1161px;top:176px;font-size:10.5px;line-height:10px;color:#555;letter-spacing:-0.3px">xy</div>
<svg style="position:absolute;left:1181px;top:176px;" width="16" height="16" viewBox="0 0 16 16"><path d="M1.5 1 V15 H14" fill="none" stroke="#3b5470" stroke-width="1"/><path d="M0 3 L1.5 0.5 L3 3 Z" fill="#3b5470"/><path d="M1.5 15 H14" stroke="#3aa53a" stroke-width="1"/><path d="M12.5 13.5 L15 15 L12.5 16.5 Z" fill="#3aa53a"/></svg>
<div class="t" style="left:1184px;top:176px;font-size:10.5px;line-height:10px;color:#555;letter-spacing:-0.3px">yz</div>
<svg style="position:absolute;left:1204px;top:176px;" width="16" height="16" viewBox="0 0 16 16"><path d="M1.5 1 V15 H14" fill="none" stroke="#3b5470" stroke-width="1"/><path d="M0 3 L1.5 0.5 L3 3 Z" fill="#3b5470"/><path d="M1.5 15 H14" stroke="#d03030" stroke-width="1"/><path d="M12.5 13.5 L15 15 L12.5 16.5 Z" fill="#d03030"/></svg>
<div class="t" style="left:1207px;top:176px;font-size:10.5px;line-height:10px;color:#555;letter-spacing:-0.3px">xz</div>
<svg style="position:absolute;left:1226px;top:178px;" width="16" height="12" viewBox="0 0 16 12"><rect x="0" y="0" width="6" height="12" rx="1" fill="#4a7dbf"/><path d="M6 4 L11 1.5 H15.5 V11 H11 L6 8 Z" fill="#4a7dbf"/><path d="M10 3 V9 M12.5 2 V10" stroke="#cfe0f4" stroke-width="0.9"/></svg>
<div style="position:absolute;left:1249px;top:176px;width:1px;height:17px;background:#c8c8c8"></div>
<svg style="position:absolute;left:1258px;top:177px;" width="14" height="14" viewBox="0 0 14 14"><path d="M10.5 3.5 A5.5 5.5 0 1 1 5 1.5" fill="none" stroke="#4a7dbf" stroke-width="1.5" transform="translate(0,1)"/><path d="M5.5 0 L10 2.3 L6 5.5 Z" fill="#4a7dbf"/></svg>
<svg style="position:absolute;left:1280px;top:182px;" width="8" height="5" viewBox="0 0 8 5"><path d="M0 0 H7.5 L3.75 4.5 Z" fill="#111"/></svg>
<div style="position:absolute;left:1298px;top:176px;width:1px;height:17px;background:#c8c8c8"></div>
<svg style="position:absolute;left:1306px;top:176px;" width="17" height="17" viewBox="0 0 17 17"><path d="M1 3 Q1 0.5 4 0.5 H9 Q12 0.5 12 3 V9 Q12 11 9 11 H4 Q1 11 1 9 Z" fill="#e4e6ea" stroke="#8a93a0" stroke-width="1"/><path d="M5 8 Q5 5 8 5 H13 Q16.5 5 16.5 8 V14 Q16.5 16.5 13 16.5 H8 Q5 16.5 5 14 Z" fill="#3b5577"/></svg>
<svg style="position:absolute;left:1330px;top:182px;" width="8" height="5" viewBox="0 0 8 5"><path d="M0 0 H7.5 L3.75 4.5 Z" fill="#111"/></svg>
<div style="position:absolute;left:1348px;top:176px;width:1px;height:17px;background:#c8c8c8"></div>
<svg style="position:absolute;left:1356px;top:176px;" width="17" height="15" viewBox="0 0 17 15"><path d="M1 8 Q1 4.5 4 4.5 H13 Q16 4.5 16 8 V12 Q16 14.5 13 14.5 H4 Q1 14.5 1 12 Z" fill="#e2e4e8" stroke="#6a7686" stroke-width="1"/><path d="M1 10 H16" stroke="#6a7686" stroke-width="0.8"/><rect x="4.5" y="0.5" width="8" height="7" fill="#fff" stroke="#1e4f9a" stroke-dasharray="1.5,1"/><rect x="6.5" y="2.5" width="4" height="3" fill="#1e4f9a"/></svg>
<svg style="position:absolute;left:1380px;top:182px;" width="8" height="5" viewBox="0 0 8 5"><path d="M0 0 H7.5 L3.75 4.5 Z" fill="#111"/></svg>
<svg style="position:absolute;left:1398px;top:176px;" width="17" height="15" viewBox="0 0 17 15"><path d="M1 8 Q1 4.5 4 4.5 H13 Q16 4.5 16 8 V12 Q16 14.5 13 14.5 H4 Q1 14.5 1 12 Z" fill="#3b5577"/><rect x="4.5" y="0.5" width="8" height="7" fill="#e2e4e8" stroke="#fff" stroke-dasharray="1.5,1"/></svg>
<svg style="position:absolute;left:1422px;top:182px;" width="8" height="5" viewBox="0 0 8 5"><path d="M0 0 H7.5 L3.75 4.5 Z" fill="#111"/></svg>
<svg style="position:absolute;left:1441px;top:177px;" width="16" height="15" viewBox="0 0 16 15"><rect x="0.5" y="0.5" width="13" height="13" fill="none" stroke="#3b78c2" stroke-dasharray="2,1.5"/><rect x="3" y="3" width="7" height="7" fill="#8cb3e0"/><path d="M8 8 L15 15" stroke="#3b78c2" stroke-width="1.3"/><path d="M7 7 L13 9 L9 13 Z" fill="#3b78c2"/></svg>
<svg style="position:absolute;left:1464px;top:176px;" width="15" height="16" viewBox="0 0 15 16"><rect x="0.5" y="1.5" width="13" height="13" fill="none" stroke="#3b78c2" stroke-dasharray="2,1.5"/><path d="M4 4 H12 V12 Z" fill="#86b0e2"/><path d="M1 0 L7 11" stroke="#9a6a3a" stroke-width="1.3"/><path d="M5 10 L9 9 L11 15 L8 15.5 Z" fill="#d6b07a"/></svg>
<div style="position:absolute;left:1486px;top:176px;width:1px;height:17px;background:#c8c8c8"></div>
<svg style="position:absolute;left:1494px;top:179px;" width="16" height="10" viewBox="0 0 16 10"><path d="M1 5 Q8 -1 15 5 Q8 11 1 5 Z" fill="none" stroke="#b8b8b8" stroke-width="1.3"/><circle cx="8" cy="5" r="2" fill="#b8b8b8"/><path d="M2 0 L14 10" stroke="#9a9a9a" stroke-width="1.3"/></svg>
<svg style="position:absolute;left:1516px;top:176px;" width="18" height="16" viewBox="0 0 18 16"><path d="M6 2 A4 4 0 1 1 4.5 7.5" fill="none" stroke="#2e5185" stroke-width="1.3"/><path d="M3 0 L7 2.5 L3 5 Z" fill="#2e5185"/><ellipse cx="3.5" cy="13" rx="3" ry="1.8" fill="#2e5185"/><path d="M10 10 L16 16" stroke="#8a8a8a" stroke-width="1.2"/><ellipse cx="13" cy="13" rx="2.5" ry="1.5" fill="none" stroke="#8a8a8a" stroke-width="0.9"/></svg>
<svg style="position:absolute;left:1540px;top:177px;" width="17" height="14" viewBox="0 0 17 14"><rect x="0.7" y="0.7" width="15.6" height="12.6" fill="#fff" stroke="#2e5185" stroke-width="1.3"/><path d="M1 3 H16" stroke="#2e5185" stroke-width="1"/><ellipse cx="8.5" cy="8" rx="5" ry="2.5" fill="#2e5185"/><circle cx="8.5" cy="8" r="1.3" fill="#fff"/></svg>
<svg style="position:absolute;left:1564px;top:182px;" width="8" height="5" viewBox="0 0 8 5"><path d="M0 0 H7.5 L3.75 4.5 Z" fill="#111"/></svg>
<div style="position:absolute;left:1582px;top:176px;width:1px;height:17px;background:#c8c8c8"></div>
<div style="position:absolute;left:1589px;top:175px;width:19px;height:18px;background:#bcd6f2;border:1px solid #2e64a8;border-radius:2px;box-sizing:border-box"></div>
<svg style="position:absolute;left:1591px;top:177px;" width="15" height="14" viewBox="0 0 15 14"><path d="M1 4 H5 L13 0 V14 L5 10 H1 Z" fill="#4a7dbf"/><path d="M8 5 Q10 7 8 9" fill="none" stroke="#dde8f6" stroke-width="1"/><path d="M5 10 L15 14" stroke="#555" stroke-width="0.8"/></svg>
<svg style="position:absolute;left:1614px;top:177px;" width="16" height="14" viewBox="0 0 16 14"><path d="M0.7 3 L3 0.7 H15 V11 L12.5 13.3 H0.7 Z" fill="none" stroke="#4a7dbf" stroke-width="1.1"/><rect x="3" y="3" width="12" height="10" fill="#c8d4e6" stroke="#4a7dbf" stroke-width="1"/></svg>
<svg style="position:absolute;left:1637px;top:177px;" width="16" height="14" viewBox="0 0 16 14"><rect x="0.7" y="3" width="12" height="10" fill="none" stroke="#4a7dbf" stroke-width="1.1"/><rect x="3.3" y="0.7" width="12" height="10" fill="none" stroke="#4a7dbf" stroke-width="1.1"/><path d="M0.7 3 L3.3 0.7 M12.7 3 L15.3 0.7 M0.7 13 L3.3 10.7 M12.7 13 L15.3 10.7" stroke="#4a7dbf" stroke-width="1"/></svg>
<div style="position:absolute;left:1658px;top:175px;width:19px;height:18px;background:#bcd6f2;border:1.5px solid #2f4f80;border-radius:2px;box-sizing:border-box"></div>
<svg style="position:absolute;left:1661px;top:178px;" width="13" height="12" viewBox="0 0 13 12"><path d="M6.5 2 V10" stroke="#3d7cc9" stroke-width="1"/><path d="M5 3.5 L6.5 1 L8 3.5 Z" fill="#3d7cc9"/><path d="M6.5 10 L1 7" stroke="#3aa53a" stroke-width="1"/><path d="M6.5 10 L12 7" stroke="#e03060" stroke-width="1"/></svg>
<div style="position:absolute;left:1681px;top:175px;width:19px;height:18px;background:#bcd6f2;border:1.5px solid #2f4f80;border-radius:2px;box-sizing:border-box"></div>
<svg style="position:absolute;left:1684px;top:178px;" width="13" height="12" viewBox="0 0 13 12"><rect x="0.5" y="0.5" width="12" height="11" fill="none" stroke="#3d6fb8" stroke-width="1"/><path d="M4.5 0.5 V11.5 M8.5 0.5 V11.5 M0.5 4 H12.5 M0.5 7.8 H12.5" stroke="#3d6fb8" stroke-width="1"/></svg>
<div style="position:absolute;left:1705px;top:176px;width:1px;height:17px;background:#c8c8c8"></div>
<svg style="position:absolute;left:1712px;top:176px;" width="18" height="17" viewBox="0 0 18 17"><path d="M1 4 L4 1.5 H15 V11 L12 13.5 H1 Z" fill="#d8d8d8" stroke="#777" stroke-width="1"/><path d="M1 4 H12 V13.5 M12 4 L15 1.5" fill="none" stroke="#777" stroke-width="1"/><rect x="7" y="4.5" width="8" height="8" fill="#8fb0dd"/><circle cx="13" cy="13" r="3.6" fill="#fff" stroke="#e0613e" stroke-width="1.5"/><path d="M10.8 15.2 L15.2 10.8" stroke="#e0613e" stroke-width="1.4"/></svg>
<svg style="position:absolute;left:1737px;top:176px;" width="15" height="17" viewBox="0 0 15 17"><path d="M7.5 1 Q14 1 14 8 Q14 15 7 16 Q3 16.5 1.5 13 Q0.8 10 2 8 Q3 6 2 4 Q3 1 7.5 1 Z" fill="#d6d6d6" stroke="#707070" stroke-width="1.2"/><circle cx="6" cy="5" r="1.8" fill="#fff" stroke="#666" stroke-width="0.8"/><circle cx="10.5" cy="4.5" r="1.3" fill="#3db8f0"/><circle cx="11" cy="7.5" r="1.3" fill="#3da0e8"/><circle cx="9.5" cy="10" r="1.3" fill="#f8b020"/><circle cx="7" cy="11.5" r="1.2" fill="#f08030"/><circle cx="4.3" cy="12.3" r="1.1" fill="#e83890"/></svg>
<svg style="position:absolute;left:1759px;top:182px;" width="8" height="5" viewBox="0 0 8 5"><path d="M0 0 H7.5 L3.75 4.5 Z" fill="#111"/></svg>
<div style="position:absolute;left:1777px;top:176px;width:1px;height:17px;background:#c8c8c8"></div>
<svg style="position:absolute;left:1786px;top:177px;" width="15" height="15" viewBox="0 0 15 15"><circle cx="7.5" cy="7.5" r="7" fill="#4a7dbf"/><circle cx="7.5" cy="7.5" r="3.2" fill="#f9fafd"/><path d="M7.5 0.5 L9 5 M14 6 L10 8.5 M11 13.5 L8.5 10 M3 13 L5.5 9 M0.8 5.5 L5 6.5" stroke="#f9fafd" stroke-width="1.3"/></svg>
<svg style="position:absolute;left:1809px;top:182px;" width="8" height="5" viewBox="0 0 8 5"><path d="M0 0 H7.5 L3.75 4.5 Z" fill="#111"/></svg>
<svg style="position:absolute;left:1827px;top:178px;" width="17" height="13" viewBox="0 0 17 13"><path d="M0.5 3 H4 L5.5 0.5 H11 L12.5 3 H16.5 V12.5 H0.5 Z" fill="#4a7dbf"/><circle cx="8.5" cy="7.5" r="3.5" fill="none" stroke="#fff" stroke-width="1.3"/><rect x="2" y="4" width="1.5" height="1.2" fill="#fff"/></svg>
<svg style="position:absolute;left:1851px;top:176px;" width="15" height="17" viewBox="0 0 15 17"><rect x="3" y="0.7" width="9" height="5" fill="none" stroke="#4a7dbf" stroke-width="1.3"/><rect x="0" y="5" width="15" height="8" rx="1.5" fill="#4a7dbf"/><rect x="3" y="10.5" width="9" height="5.5" fill="#fff" stroke="#4a7dbf" stroke-width="1.3"/><rect x="10.5" y="7.5" width="1.2" height="1" fill="#fff"/><rect x="12.5" y="7.5" width="1.2" height="1" fill="#fff"/></svg>
<svg style="position:absolute;left:1889px;top:202px;" width="22" height="20" viewBox="0 0 22 20"><path d="M1 6 L18 1 L21 15 L5 19 Z" fill="#f0f0f0" stroke="#dedede" stroke-width="0.8"/><rect x="4.5" y="5" width="13" height="10" rx="2.5" fill="#1d3fb0"/><path d="M7 7 L14 10 L7 13 Z" fill="#f2e23a"/><rect x="14" y="7" width="3" height="6" fill="#2aa3e8"/></svg>
<svg style="position:absolute;left:966px;top:142px" width="950" height="784" viewBox="966 142 950 784"><polygon points="1053.4,445.5 1382.4,329.3 1382.4,338.3 1053.4,454.5" fill="#e6e8ec" stroke="none"/><line x1="1053.4" y1="445.5" x2="1382.4" y2="329.3" stroke="#8c8c8c" stroke-width="0.55"/><line x1="1053.4" y1="447.3" x2="1382.4" y2="331.1" stroke="#8c8c8c" stroke-width="0.55"/><line x1="1053.4" y1="449.1" x2="1382.4" y2="332.9" stroke="#8c8c8c" stroke-width="0.55"/><line x1="1053.4" y1="450.9" x2="1382.4" y2="334.7" stroke="#8c8c8c" stroke-width="0.55"/><line x1="1053.4" y1="452.7" x2="1382.4" y2="336.5" stroke="#8c8c8c" stroke-width="0.55"/><line x1="1053.4" y1="454.5" x2="1382.4" y2="338.3" stroke="#8c8c8c" stroke-width="0.55"/><line x1="1053.4" y1="445.5" x2="1053.4" y2="454.5" stroke="#8c8c8c" stroke-width="0.8"/><line x1="1382.4" y1="329.3" x2="1382.4" y2="338.3" stroke="#8c8c8c" stroke-width="0.8"/><line x1="1056.0" y1="444.6" x2="1056.0" y2="453.6" stroke="#a0a0a0" stroke-width="0.4"/><line x1="1058.6" y1="443.7" x2="1058.6" y2="452.7" stroke="#a0a0a0" stroke-width="0.4"/><line x1="1061.2" y1="442.7" x2="1061.2" y2="451.7" stroke="#a0a0a0" stroke-width="0.4"/><line x1="1063.8" y1="441.8" x2="1063.8" y2="450.8" stroke="#a0a0a0" stroke-width="0.4"/><line x1="1066.5" y1="440.9" x2="1066.5" y2="449.9" stroke="#a0a0a0" stroke-width="0.4"/><line x1="1069.1" y1="440.0" x2="1069.1" y2="449.0" stroke="#a0a0a0" stroke-width="0.4"/><line x1="1071.7" y1="439.0" x2="1071.7" y2="448.0" stroke="#a0a0a0" stroke-width="0.4"/><line x1="1074.3" y1="438.1" x2="1074.3" y2="447.1" stroke="#a0a0a0" stroke-width="0.4"/><line x1="1076.9" y1="437.2" x2="1076.9" y2="446.2" stroke="#a0a0a0" stroke-width="0.4"/><line x1="1079.5" y1="436.3" x2="1079.5" y2="445.3" stroke="#a0a0a0" stroke-width="0.4"/><line x1="1082.1" y1="435.4" x2="1082.1" y2="444.4" stroke="#a0a0a0" stroke-width="0.4"/><line x1="1084.7" y1="434.4" x2="1084.7" y2="443.4" stroke="#a0a0a0" stroke-width="0.4"/><line x1="1087.3" y1="433.5" x2="1087.3" y2="442.5" stroke="#a0a0a0" stroke-width="0.4"/><line x1="1090.0" y1="432.6" x2="1090.0" y2="441.6" stroke="#a0a0a0" stroke-width="0.4"/><line x1="1092.6" y1="431.7" x2="1092.6" y2="440.7" stroke="#a0a0a0" stroke-width="0.4"/><line x1="1095.2" y1="430.7" x2="1095.2" y2="439.7" stroke="#a0a0a0" stroke-width="0.4"/><line x1="1097.8" y1="429.8" x2="1097.8" y2="438.8" stroke="#a0a0a0" stroke-width="0.4"/><line x1="1100.4" y1="428.9" x2="1100.4" y2="437.9" stroke="#a0a0a0" stroke-width="0.4"/><line x1="1103.0" y1="428.0" x2="1103.0" y2="437.0" stroke="#a0a0a0" stroke-width="0.4"/><line x1="1105.6" y1="427.1" x2="1105.6" y2="436.1" stroke="#a0a0a0" stroke-width="0.4"/><line x1="1108.2" y1="426.1" x2="1108.2" y2="435.1" stroke="#a0a0a0" stroke-width="0.4"/><line x1="1110.8" y1="425.2" x2="1110.8" y2="434.2" stroke="#a0a0a0" stroke-width="0.4"/><line x1="1113.5" y1="424.3" x2="1113.5" y2="433.3" stroke="#a0a0a0" stroke-width="0.4"/><line x1="1116.1" y1="423.4" x2="1116.1" y2="432.4" stroke="#a0a0a0" stroke-width="0.4"/><line x1="1118.7" y1="422.4" x2="1118.7" y2="431.4" stroke="#a0a0a0" stroke-width="0.4"/><line x1="1121.3" y1="421.5" x2="1121.3" y2="430.5" stroke="#a0a0a0" stroke-width="0.4"/><line x1="1123.9" y1="420.6" x2="1123.9" y2="429.6" stroke="#a0a0a0" stroke-width="0.4"/><line x1="1126.5" y1="419.7" x2="1126.5" y2="428.7" stroke="#a0a0a0" stroke-width="0.4"/><line x1="1129.1" y1="418.8" x2="1129.1" y2="427.8" stroke="#a0a0a0" stroke-width="0.4"/><line x1="1131.7" y1="417.8" x2="1131.7" y2="426.8" stroke="#a0a0a0" stroke-width="0.4"/><line x1="1134.3" y1="416.9" x2="1134.3" y2="425.9" stroke="#a0a0a0" stroke-width="0.4"/><line x1="1137.0" y1="416.0" x2="1137.0" y2="425.0" stroke="#a0a0a0" stroke-width="0.4"/><line x1="1139.6" y1="415.1" x2="1139.6" y2="424.1" stroke="#a0a0a0" stroke-width="0.4"/><line x1="1142.2" y1="414.1" x2="1142.2" y2="423.1" stroke="#a0a0a0" stroke-width="0.4"/><line x1="1144.8" y1="413.2" x2="1144.8" y2="422.2" stroke="#a0a0a0" stroke-width="0.4"/><line x1="1147.4" y1="412.3" x2="1147.4" y2="421.3" stroke="#a0a0a0" stroke-width="0.4"/><line x1="1150.0" y1="411.4" x2="1150.0" y2="420.4" stroke="#a0a0a0" stroke-width="0.4"/><line x1="1152.6" y1="410.5" x2="1152.6" y2="419.5" stroke="#a0a0a0" stroke-width="0.4"/><line x1="1155.2" y1="409.5" x2="1155.2" y2="418.5" stroke="#a0a0a0" stroke-width="0.4"/><line x1="1157.8" y1="408.6" x2="1157.8" y2="417.6" stroke="#a0a0a0" stroke-width="0.4"/><line x1="1160.5" y1="407.7" x2="1160.5" y2="416.7" stroke="#a0a0a0" stroke-width="0.4"/><line x1="1163.1" y1="406.8" x2="1163.1" y2="415.8" stroke="#a0a0a0" stroke-width="0.4"/><line x1="1165.7" y1="405.8" x2="1165.7" y2="414.8" stroke="#a0a0a0" stroke-width="0.4"/><line x1="1168.3" y1="404.9" x2="1168.3" y2="413.9" stroke="#a0a0a0" stroke-width="0.4"/><line x1="1170.9" y1="404.0" x2="1170.9" y2="413.0" stroke="#a0a0a0" stroke-width="0.4"/><line x1="1173.5" y1="403.1" x2="1173.5" y2="412.1" stroke="#a0a0a0" stroke-width="0.4"/><line x1="1176.1" y1="402.2" x2="1176.1" y2="411.2" stroke="#a0a0a0" stroke-width="0.4"/><line x1="1178.7" y1="401.2" x2="1178.7" y2="410.2" stroke="#a0a0a0" stroke-width="0.4"/><line x1="1181.3" y1="400.3" x2="1181.3" y2="409.3" stroke="#a0a0a0" stroke-width="0.4"/><line x1="1184.0" y1="399.4" x2="1184.0" y2="408.4" stroke="#a0a0a0" stroke-width="0.4"/><line x1="1186.6" y1="398.5" x2="1186.6" y2="407.5" stroke="#a0a0a0" stroke-width="0.4"/><line x1="1189.2" y1="397.5" x2="1189.2" y2="406.5" stroke="#a0a0a0" stroke-width="0.4"/><line x1="1191.8" y1="396.6" x2="1191.8" y2="405.6" stroke="#a0a0a0" stroke-width="0.4"/><line x1="1194.4" y1="395.7" x2="1194.4" y2="404.7" stroke="#a0a0a0" stroke-width="0.4"/><line x1="1197.0" y1="394.8" x2="1197.0" y2="403.8" stroke="#a0a0a0" stroke-width="0.4"/><line x1="1199.6" y1="393.9" x2="1199.6" y2="402.9" stroke="#a0a0a0" stroke-width="0.4"/><line x1="1202.2" y1="392.9" x2="1202.2" y2="401.9" stroke="#a0a0a0" stroke-width="0.4"/><line x1="1204.8" y1="392.0" x2="1204.8" y2="401.0" stroke="#a0a0a0" stroke-width="0.4"/><line x1="1207.5" y1="391.1" x2="1207.5" y2="400.1" stroke="#a0a0a0" stroke-width="0.4"/><line x1="1210.1" y1="390.2" x2="1210.1" y2="399.2" stroke="#a0a0a0" stroke-width="0.4"/><line x1="1212.7" y1="389.2" x2="1212.7" y2="398.2" stroke="#a0a0a0" stroke-width="0.4"/><line x1="1215.3" y1="388.3" x2="1215.3" y2="397.3" stroke="#a0a0a0" stroke-width="0.4"/><line x1="1217.9" y1="387.4" x2="1217.9" y2="396.4" stroke="#a0a0a0" stroke-width="0.4"/><line x1="1220.5" y1="386.5" x2="1220.5" y2="395.5" stroke="#a0a0a0" stroke-width="0.4"/><line x1="1223.1" y1="385.6" x2="1223.1" y2="394.6" stroke="#a0a0a0" stroke-width="0.4"/><line x1="1225.7" y1="384.6" x2="1225.7" y2="393.6" stroke="#a0a0a0" stroke-width="0.4"/><line x1="1228.3" y1="383.7" x2="1228.3" y2="392.7" stroke="#a0a0a0" stroke-width="0.4"/><line x1="1231.0" y1="382.8" x2="1231.0" y2="391.8" stroke="#a0a0a0" stroke-width="0.4"/><line x1="1233.6" y1="381.9" x2="1233.6" y2="390.9" stroke="#a0a0a0" stroke-width="0.4"/><line x1="1236.2" y1="380.9" x2="1236.2" y2="389.9" stroke="#a0a0a0" stroke-width="0.4"/><line x1="1238.8" y1="380.0" x2="1238.8" y2="389.0" stroke="#a0a0a0" stroke-width="0.4"/><line x1="1241.4" y1="379.1" x2="1241.4" y2="388.1" stroke="#a0a0a0" stroke-width="0.4"/><line x1="1244.0" y1="378.2" x2="1244.0" y2="387.2" stroke="#a0a0a0" stroke-width="0.4"/><line x1="1246.6" y1="377.3" x2="1246.6" y2="386.3" stroke="#a0a0a0" stroke-width="0.4"/><line x1="1249.2" y1="376.3" x2="1249.2" y2="385.3" stroke="#a0a0a0" stroke-width="0.4"/><line x1="1251.8" y1="375.4" x2="1251.8" y2="384.4" stroke="#a0a0a0" stroke-width="0.4"/><line x1="1254.5" y1="374.5" x2="1254.5" y2="383.5" stroke="#a0a0a0" stroke-width="0.4"/><line x1="1257.1" y1="373.6" x2="1257.1" y2="382.6" stroke="#a0a0a0" stroke-width="0.4"/><line x1="1259.7" y1="372.6" x2="1259.7" y2="381.6" stroke="#a0a0a0" stroke-width="0.4"/><line x1="1262.3" y1="371.7" x2="1262.3" y2="380.7" stroke="#a0a0a0" stroke-width="0.4"/><line x1="1264.9" y1="370.8" x2="1264.9" y2="379.8" stroke="#a0a0a0" stroke-width="0.4"/><line x1="1267.5" y1="369.9" x2="1267.5" y2="378.9" stroke="#a0a0a0" stroke-width="0.4"/><line x1="1270.1" y1="369.0" x2="1270.1" y2="378.0" stroke="#a0a0a0" stroke-width="0.4"/><line x1="1272.7" y1="368.0" x2="1272.7" y2="377.0" stroke="#a0a0a0" stroke-width="0.4"/><line x1="1275.3" y1="367.1" x2="1275.3" y2="376.1" stroke="#a0a0a0" stroke-width="0.4"/><line x1="1278.0" y1="366.2" x2="1278.0" y2="375.2" stroke="#a0a0a0" stroke-width="0.4"/><line x1="1280.6" y1="365.3" x2="1280.6" y2="374.3" stroke="#a0a0a0" stroke-width="0.4"/><line x1="1283.2" y1="364.3" x2="1283.2" y2="373.3" stroke="#a0a0a0" stroke-width="0.4"/><line x1="1285.8" y1="363.4" x2="1285.8" y2="372.4" stroke="#a0a0a0" stroke-width="0.4"/><line x1="1288.4" y1="362.5" x2="1288.4" y2="371.5" stroke="#a0a0a0" stroke-width="0.4"/><line x1="1291.0" y1="361.6" x2="1291.0" y2="370.6" stroke="#a0a0a0" stroke-width="0.4"/><line x1="1293.6" y1="360.7" x2="1293.6" y2="369.7" stroke="#a0a0a0" stroke-width="0.4"/><line x1="1296.2" y1="359.7" x2="1296.2" y2="368.7" stroke="#a0a0a0" stroke-width="0.4"/><line x1="1298.8" y1="358.8" x2="1298.8" y2="367.8" stroke="#a0a0a0" stroke-width="0.4"/><line x1="1301.5" y1="357.9" x2="1301.5" y2="366.9" stroke="#a0a0a0" stroke-width="0.4"/><line x1="1304.1" y1="357.0" x2="1304.1" y2="366.0" stroke="#a0a0a0" stroke-width="0.4"/><line x1="1306.7" y1="356.0" x2="1306.7" y2="365.0" stroke="#a0a0a0" stroke-width="0.4"/><line x1="1309.3" y1="355.1" x2="1309.3" y2="364.1" stroke="#a0a0a0" stroke-width="0.4"/><line x1="1311.9" y1="354.2" x2="1311.9" y2="363.2" stroke="#a0a0a0" stroke-width="0.4"/><line x1="1314.5" y1="353.3" x2="1314.5" y2="362.3" stroke="#a0a0a0" stroke-width="0.4"/><line x1="1317.1" y1="352.4" x2="1317.1" y2="361.4" stroke="#a0a0a0" stroke-width="0.4"/><line x1="1319.7" y1="351.4" x2="1319.7" y2="360.4" stroke="#a0a0a0" stroke-width="0.4"/><line x1="1322.3" y1="350.5" x2="1322.3" y2="359.5" stroke="#a0a0a0" stroke-width="0.4"/><line x1="1325.0" y1="349.6" x2="1325.0" y2="358.6" stroke="#a0a0a0" stroke-width="0.4"/><line x1="1327.6" y1="348.7" x2="1327.6" y2="357.7" stroke="#a0a0a0" stroke-width="0.4"/><line x1="1330.2" y1="347.7" x2="1330.2" y2="356.7" stroke="#a0a0a0" stroke-width="0.4"/><line x1="1332.8" y1="346.8" x2="1332.8" y2="355.8" stroke="#a0a0a0" stroke-width="0.4"/><line x1="1335.4" y1="345.9" x2="1335.4" y2="354.9" stroke="#a0a0a0" stroke-width="0.4"/><line x1="1338.0" y1="345.0" x2="1338.0" y2="354.0" stroke="#a0a0a0" stroke-width="0.4"/><line x1="1340.6" y1="344.1" x2="1340.6" y2="353.1" stroke="#a0a0a0" stroke-width="0.4"/><line x1="1343.2" y1="343.1" x2="1343.2" y2="352.1" stroke="#a0a0a0" stroke-width="0.4"/><line x1="1345.8" y1="342.2" x2="1345.8" y2="351.2" stroke="#a0a0a0" stroke-width="0.4"/><line x1="1348.5" y1="341.3" x2="1348.5" y2="350.3" stroke="#a0a0a0" stroke-width="0.4"/><line x1="1351.1" y1="340.4" x2="1351.1" y2="349.4" stroke="#a0a0a0" stroke-width="0.4"/><line x1="1353.7" y1="339.4" x2="1353.7" y2="348.4" stroke="#a0a0a0" stroke-width="0.4"/><line x1="1356.3" y1="338.5" x2="1356.3" y2="347.5" stroke="#a0a0a0" stroke-width="0.4"/><line x1="1358.9" y1="337.6" x2="1358.9" y2="346.6" stroke="#a0a0a0" stroke-width="0.4"/><line x1="1361.5" y1="336.7" x2="1361.5" y2="345.7" stroke="#a0a0a0" stroke-width="0.4"/><line x1="1364.1" y1="335.8" x2="1364.1" y2="344.8" stroke="#a0a0a0" stroke-width="0.4"/><line x1="1366.7" y1="334.8" x2="1366.7" y2="343.8" stroke="#a0a0a0" stroke-width="0.4"/><line x1="1369.3" y1="333.9" x2="1369.3" y2="342.9" stroke="#a0a0a0" stroke-width="0.4"/><line x1="1372.0" y1="333.0" x2="1372.0" y2="342.0" stroke="#a0a0a0" stroke-width="0.4"/><line x1="1374.6" y1="332.1" x2="1374.6" y2="341.1" stroke="#a0a0a0" stroke-width="0.4"/><line x1="1377.2" y1="331.1" x2="1377.2" y2="340.1" stroke="#a0a0a0" stroke-width="0.4"/><line x1="1379.8" y1="330.2" x2="1379.8" y2="339.2" stroke="#a0a0a0" stroke-width="0.4"/><line x1="1138.6" y1="415.4" x2="1138.6" y2="424.4" stroke="#777" stroke-width="1"/><line x1="1222.0" y1="386.0" x2="1222.0" y2="395.0" stroke="#777" stroke-width="1"/><line x1="1303.8" y1="357.1" x2="1303.8" y2="366.1" stroke="#777" stroke-width="1"/><line x1="1408.3" y1="331.0" x2="1829.6" y2="598.7" stroke="#8a8a8a" stroke-width="0.8"/><line x1="1408.3" y1="332.9" x2="1829.6" y2="600.6" stroke="#8a8a8a" stroke-width="0.8"/><line x1="1408.3" y1="334.8" x2="1829.6" y2="602.5" stroke="#8a8a8a" stroke-width="0.8"/><line x1="1408.3" y1="336.7" x2="1829.6" y2="604.4" stroke="#8a8a8a" stroke-width="0.8"/><line x1="1408.3" y1="338.6" x2="1829.6" y2="606.3" stroke="#8a8a8a" stroke-width="0.8"/><line x1="1408.3" y1="340.5" x2="1829.6" y2="608.2" stroke="#8a8a8a" stroke-width="0.8"/><line x1="1408.3" y1="331" x2="1408.3" y2="340.5" stroke="#8c8c8c" stroke-width="0.8"/><line x1="1829.6" y1="598.7" x2="1829.6" y2="608.2" stroke="#8c8c8c" stroke-width="0.8"/><line x1="1497.3" y1="387.6" x2="1497.3" y2="397.1" stroke="#777" stroke-width="1"/><line x1="1657" y1="489" x2="1657" y2="498.5" stroke="#777" stroke-width="1"/><line x1="1065.5" y1="479.3" x2="1467.8" y2="778.6" stroke="#8a8a8a" stroke-width="1"/><line x1="1467.8" y1="778.6" x2="1812.2" y2="631.7" stroke="#8a8a8a" stroke-width="1"/><line x1="1812.2" y1="631.7" x2="1796.3" y2="622.8" stroke="#8a8a8a" stroke-width="1"/><line x1="1150" y1="542.5" x2="1163.8" y2="536.5" stroke="#8a8a8a" stroke-width="1"/><line x1="1302.4" y1="656.2" x2="1317.5" y2="649.4" stroke="#8a8a8a" stroke-width="1"/><line x1="1544.6" y1="729.6" x2="1557.4" y2="740.2" stroke="#8a8a8a" stroke-width="1"/><line x1="1629.4" y1="692.5" x2="1644.6" y2="703" stroke="#8a8a8a" stroke-width="1"/><line x1="1714.3" y1="657.2" x2="1730.4" y2="667.2" stroke="#8a8a8a" stroke-width="1"/><polygon points="1064.5,453.8 1467.9,750.7 1467.9,760.0 1064.5,463.1" fill="#dbdbdb"/><polygon points="1467.9,750.7 1813.7,605.3 1813.7,614.6 1467.9,760.0" fill="#a4a4a4"/><polygon points="1393.4,336.6 1064.5,453.8 1467.9,750.7 1813.7,605.3" fill="#cccccc"/><polyline points="1813.7,605.3 1393.4,336.6 1064.5,453.8 1467.9,750.7 1813.7,605.3" stroke="#111" stroke-width="1.35" stroke-linejoin="round" stroke-linecap="round" fill="none"/><polyline points="1064.5,453.8 1064.5,463.1 1467.9,760.0 1813.7,614.6 1813.7,605.3" stroke="#111" stroke-width="1.35" stroke-linejoin="round" stroke-linecap="round" fill="none"/><line x1="1467.9" y1="750.7" x2="1467.9" y2="760.0" stroke="#333" stroke-width="1.3"/></svg>
<div class="t" style="left:1499px;top:369px;font-size:12.5px;line-height:12.5px;color:#111">100</div>
<div class="t" style="left:1629px;top:410px;font-size:12.5px;line-height:12.5px;color:#111">mm</div>
<div class="t" style="left:1661px;top:470px;font-size:12.5px;line-height:12.5px;color:#111">50</div>
<div class="t" style="left:1835px;top:580px;font-size:12.5px;line-height:12.5px;color:#111">0</div>
<div class="t" style="left:1841px;top:599px;font-size:12.5px;line-height:12.5px;color:#111">1</div>
<div class="t" style="left:1872px;top:600px;font-size:12.5px;line-height:12.5px;color:#111">mm</div>
<div class="t" style="left:1813px;top:641px;font-size:12.5px;line-height:12.5px;color:#111">80</div>
<div class="t" style="left:1731px;top:676px;font-size:12.5px;line-height:12.5px;color:#111">60</div>
<div class="t" style="left:1646px;top:713px;font-size:12.5px;line-height:12.5px;color:#111">40</div>
<div class="t" style="left:1657px;top:736px;font-size:12.5px;line-height:12.5px;color:#111">mm</div>
<div class="t" style="left:1559px;top:750px;font-size:12.5px;line-height:12.5px;color:#111">20</div>
<div class="t" style="left:1471px;top:788px;font-size:12.5px;line-height:12.5px;color:#111">0</div>
<svg style="position:absolute;left:0;top:0" width="1920" height="1160" viewBox="0 0 1920 1160"><path d="M1010.1 882.5 V862" stroke="#4a7fbf" stroke-width="2"/><path d="M1006.8 864.8 L1010.1 856.5 L1013.4 864.8 Z" fill="#4a7fbf"/><path d="M1010.1 882.5 L996.5 873" stroke="#45a83a" stroke-width="2"/><path d="M991.8 869.6 L999.8 871.3 L996.3 876.2 Z" fill="#45a83a"/><path d="M1010.1 882.5 L1028 875" stroke="#e0185a" stroke-width="2"/><path d="M1033.8 872.3 L1025.7 872.2 L1027.9 877.8 Z" fill="#e0185a"/></svg>
<div class="t" style="left:1006px;top:842px;font-size:12.5px;line-height:12.5px;color:#111;">z</div>
<div class="t" style="left:984px;top:857px;font-size:12.5px;line-height:12.5px;color:#111;">y</div>
<div class="t" style="left:1037px;top:862px;font-size:12.5px;line-height:12.5px;color:#111;">x</div>
<div style="position:absolute;left:966px;top:961px;width:950px;height:1px;background:#d2d2d4"></div>
<div style="position:absolute;left:970px;top:938px;width:89px;height:24px;background:#f9fafd;border:1px solid #d2d2d4;border-bottom:none;box-sizing:border-box"></div>
<div class="t" style="left:975px;top:946px;color:#2f5ea6;letter-spacing:0.2px">Messages</div>
<svg style="position:absolute;left:1042px;top:946px;" width="10" height="9" viewBox="0 0 10 9"><path d="M0.5 0.5 L9 8.5 M9 0.5 L0.5 8.5" stroke="#b4b8c0" stroke-width="1.1"/></svg>
<div style="position:absolute;left:1067px;top:938px;width:60px;height:23px;background:#e8e8e8"></div>
<div class="t" style="left:1071px;top:946px;color:#111;letter-spacing:0.3px">Progress</div>
<div style="position:absolute;left:1135px;top:938px;width:30px;height:23px;background:#e8e8e8"></div>
<div class="t" style="left:1140px;top:946px;color:#111;">Log</div>
<svg style="position:absolute;left:1889px;top:947px;" width="9" height="5" viewBox="0 0 9 5"><path d="M0 0 H8.5 L4.25 4.5 Z" fill="#c0c6d0"/></svg>
<svg style="position:absolute;left:1904px;top:946px;" width="7" height="11" viewBox="0 0 7 11"><rect x="1" y="0" width="5" height="6.5" fill="#c6ccd6"/><path d="M0 7 H7" stroke="#c6ccd6" stroke-width="1.2"/><path d="M3.5 7.5 V11" stroke="#c6ccd6" stroke-width="1"/></svg>
<svg style="position:absolute;left:976px;top:969px;" width="12" height="17" viewBox="0 0 12 17"><path d="M1 0.5 L4.5 8" stroke="#555" stroke-width="1.2"/><path d="M3 8 L6 6.8 L11 14.5 L6.5 16 Z" fill="#e2c89a" stroke="#c8a470" stroke-width="0.6"/><path d="M3.5 8.5 L6 7.3" stroke="#e05040" stroke-width="1.2"/></svg>
<div style="position:absolute;left:970px;top:990px;width:942px;height:134px;background:#f9fafd;border:1px solid #d2d2d4;box-sizing:border-box"></div>
<div class="t" style="left:973px;top:994px;color:#111;letter-spacing:-0.25px">COMSOL Multiphysics 5.5.0.249</div>
<div class="t" style="left:973px;top:1009px;color:#111;letter-spacing:-0.09px">[Oct 22, 2019 1:15 PM] Opened file: C:\Users\jf\Downloads\heating_circuit_redo-6ee1a78.mph</div>
<svg style="position:absolute;left:0;top:0" width="1920" height="1160" viewBox="0 0 1920 1160"><polygon points="716.4,127 635,261.5 675.6,261.5 675.6,398.3 756.3,398.3 756.3,261.5 797,261.5" fill="none" stroke="#22b14c" stroke-width="4.6" stroke-linejoin="round"/></svg>
</body></html>
